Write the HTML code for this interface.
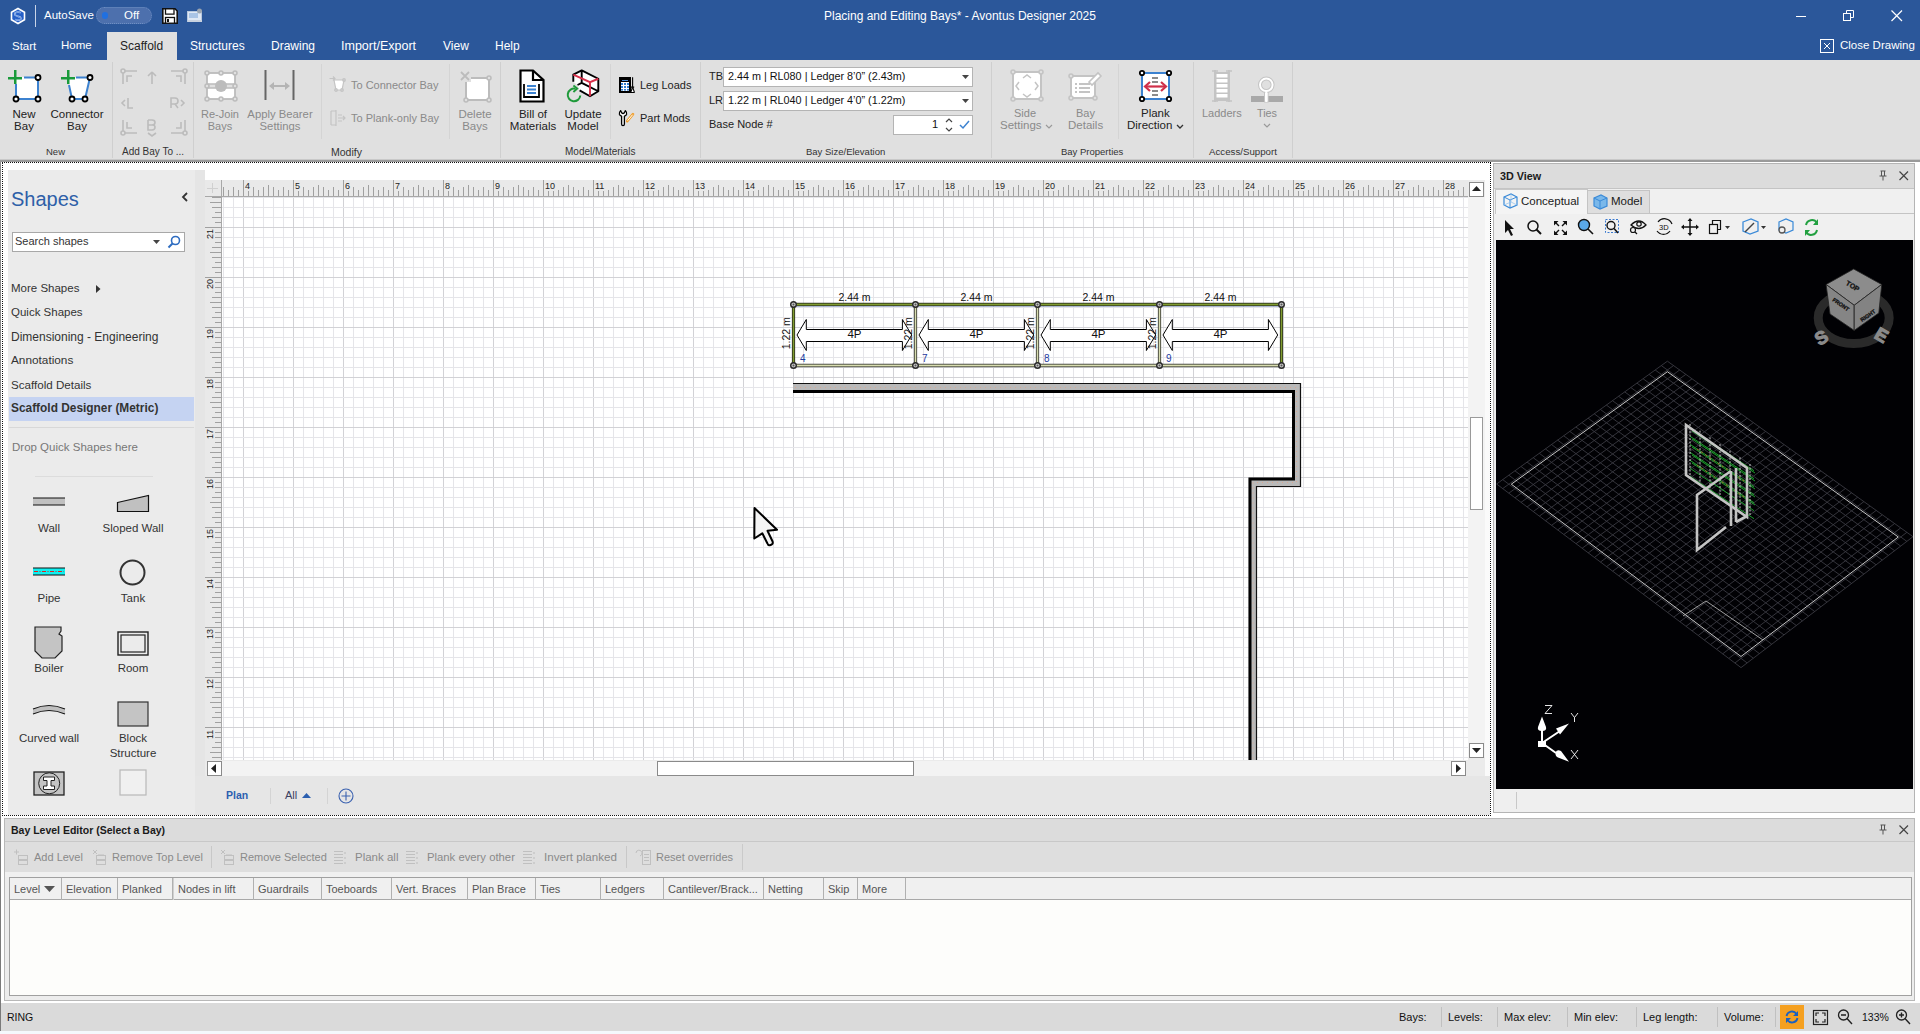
<!DOCTYPE html>
<html><head><meta charset="utf-8">
<style>
*{margin:0;padding:0;box-sizing:border-box}
html,body{width:1920px;height:1034px;overflow:hidden;background:#fff;font-family:"Liberation Sans",sans-serif;font-size:12px;color:#222}
.a{position:absolute}
.t{position:absolute;white-space:nowrap;line-height:1}
svg{position:absolute;overflow:visible}
</style></head><body>
<!-- ===== TITLE BAR ===== -->
<div class="a" style="left:0;top:0;width:1920px;height:60px;background:#2b579a"></div>
<svg style="left:9px;top:7px" width="18" height="18" viewBox="0 0 18 18"><path d="M9 1.5 L15.5 5.2 L15.5 12.8 L9 16.5 L2.5 12.8 L2.5 5.2 Z" fill="#2660c8" stroke="#fff" stroke-width="1.6"/><path d="M11.8 5.8 Q9 4.4 6.6 5.6 Q5.2 6.6 6.2 8.2 Q7.2 9 9.8 9.6 Q12.6 10.4 11.6 12.4 Q9.6 14 6.2 12.4" fill="none" stroke="#c8d8f0" stroke-width="1.6"/><path d="M11.8 5.8 Q9 4.4 6.6 5.6 Q5.2 6.6 6.2 8.2 Q7.2 9 9.8 9.6 Q12.6 10.4 11.6 12.4 Q9.6 14 6.2 12.4" fill="none" stroke="#1f62d8" stroke-width="0.6"/></svg>
<div class="a" style="left:35px;top:5px;width:1px;height:22px;background:#c9d4e8"></div>
<div class="t" style="left:44px;top:10px;font-size:11.5px;color:#fff">AutoSave</div>
<div class="a" style="left:96px;top:7px;width:56px;height:17px;border-radius:9px;background:#4d70ad;border:1px dotted #6f8fc4"></div>
<div class="a" style="left:102px;top:12px;width:6px;height:7px;border-radius:3px;background:#2070e0"></div>
<div class="t" style="left:124px;top:10px;font-size:11.5px;color:#fff">Off</div>
<svg style="left:162px;top:8px" width="16" height="16" viewBox="0 0 16 16"><path d="M0.8 0.8 H13 L15.2 3 V15.2 H0.8 Z" fill="#fff" stroke="#111" stroke-width="1.6"/><path d="M3.5 1 V6.2 H12 V1" fill="none" stroke="#111" stroke-width="1.3"/><rect x="3.5" y="9.5" width="9" height="5.7" fill="#fff" stroke="#111" stroke-width="1.3"/><rect x="5" y="11" width="2" height="3" fill="#111"/></svg>
<svg style="left:187px;top:8px" width="16" height="16" viewBox="0 0 16 16"><rect x="0.5" y="3.5" width="14" height="10" fill="#dfe8f5" stroke="#b8c8de"/><rect x="2" y="5" width="9" height="5" fill="#a9c4e6"/><rect x="1" y="12" width="14" height="2" fill="#c8d2e0"/><circle cx="12.5" cy="3" r="2.5" fill="#9aa4b0"/></svg>
<div class="t" style="left:824px;top:10px;font-size:12px;color:#fff">Placing and Editing Bays* - Avontus Designer 2025</div>
<div class="a" style="left:1796px;top:16px;width:10px;height:1px;background:#fff"></div>
<svg style="left:1843px;top:10px" width="12" height="12" viewBox="0 0 12 12"><rect x="0.5" y="3.5" width="7" height="7" fill="none" stroke="#fff"/><path d="M3.5 3.5 V0.5 H10.5 V7.5 H7.5" fill="none" stroke="#fff"/></svg>
<svg style="left:1891px;top:10px" width="12" height="12" viewBox="0 0 12 12"><path d="M0.5 0.5 L11 11 M11 0.5 L0.5 11" stroke="#fff" stroke-width="1.2"/></svg>
<!-- tabs -->
<div class="a" style="left:107px;top:32px;width:70px;height:28px;background:#e0e0e0"></div>
<div class="t" style="left:12px;top:41px;font-size:11.5px;color:#fff">Start</div>
<div class="t" style="left:61px;top:40px;font-size:11.5px;color:#fff">Home</div>
<div class="t" style="left:120px;top:40px;font-size:12px;color:#222">Scaffold</div>
<div class="t" style="left:190px;top:40px;font-size:12px;color:#fff">Structures</div>
<div class="t" style="left:271px;top:40px;font-size:12px;color:#fff">Drawing</div>
<div class="t" style="left:341px;top:40px;font-size:12.5px;color:#fff">Import/Export</div>
<div class="t" style="left:443px;top:40px;font-size:12px;color:#fff">View</div>
<div class="t" style="left:495px;top:40px;font-size:12px;color:#fff">Help</div>
<svg style="left:1820px;top:39px" width="14" height="14" viewBox="0 0 14 14"><rect x="0.5" y="0.5" width="13" height="13" fill="none" stroke="#fff"/><path d="M4 4 L10 10 M10 4 L4 10" stroke="#fff" stroke-width="1"/></svg>
<div class="t" style="left:1840px;top:40px;font-size:11.5px;color:#fff">Close Drawing</div>
<!-- ===== RIBBON ===== -->
<div class="a" style="left:0;top:60px;width:1920px;height:100px;background:#e0e0e0"></div>
<div class="a" style="left:0;top:159px;width:1920px;height:1px;background:#c8c8c8"></div>
<div class="a" style="left:0;top:160px;width:1920px;height:2px;background:#9a9a9a"></div>
<!-- group separators -->
<div class="a" style="left:112px;top:62px;width:1px;height:96px;background:#cfcfcf"></div>
<div class="a" style="left:193px;top:62px;width:1px;height:96px;background:#cfcfcf"></div>
<div class="a" style="left:500px;top:62px;width:1px;height:96px;background:#cfcfcf"></div>
<div class="a" style="left:700px;top:62px;width:1px;height:96px;background:#cfcfcf"></div>
<div class="a" style="left:991px;top:62px;width:1px;height:96px;background:#cfcfcf"></div>
<div class="a" style="left:1193px;top:62px;width:1px;height:96px;background:#cfcfcf"></div>
<div class="a" style="left:1292px;top:62px;width:1px;height:96px;background:#cfcfcf"></div>
<!-- inner separators -->
<div class="a" style="left:321px;top:64px;width:1px;height:75px;background:#d4d4d4"></div>
<div class="a" style="left:449px;top:64px;width:1px;height:75px;background:#d4d4d4"></div>
<div class="a" style="left:610px;top:64px;width:1px;height:75px;background:#d4d4d4"></div>
<div class="a" style="left:1118px;top:64px;width:1px;height:75px;background:#d4d4d4"></div>
<!-- group labels -->
<div class="t" style="left:46px;top:147px;font-size:9.5px;color:#333">New</div>
<div class="t" style="left:122px;top:147px;font-size:10px;color:#333">Add Bay To ...</div>
<div class="t" style="left:331px;top:147px;font-size:10.5px;color:#333">Modify</div>
<div class="t" style="left:565px;top:147px;font-size:10px;color:#333">Model/Materials</div>
<div class="t" style="left:806px;top:147px;font-size:9.5px;color:#333">Bay Size/Elevation</div>
<div class="t" style="left:1061px;top:147px;font-size:9.5px;color:#333">Bay Properties</div>
<div class="t" style="left:1209px;top:147px;font-size:9.7px;color:#333">Access/Support</div>
<!-- New Bay -->
<svg style="left:8px;top:69px" width="34" height="34" viewBox="0 0 34 34"><rect x="8" y="8" width="22" height="22" fill="#fff"/><path d="M16 8.5 H30 V30 H8 V15" fill="none" stroke="#3c82d0" stroke-width="2"/><rect x="0" y="8" width="14" height="2.5" fill="#1a9a3a"/><rect x="6" y="1" width="2.5" height="14" fill="#1a9a3a"/><circle cx="30" cy="8.5" r="2.5" fill="#fff" stroke="#000" stroke-width="1.8"/><circle cx="30" cy="30" r="2.5" fill="#fff" stroke="#000" stroke-width="1.8"/><circle cx="8" cy="30" r="2.5" fill="#fff" stroke="#000" stroke-width="1.8"/></svg>
<div class="t" style="left:11px;top:108px;font-size:11.5px;color:#222;width:26px;text-align:center;line-height:12px;white-space:normal">New Bay</div>
<!-- Connector Bay -->
<svg style="left:60px;top:69px" width="34" height="34" viewBox="0 0 34 34"><path d="M8 8.5 H30 L25 30 H12 Z" fill="#fff"/><path d="M16 8.5 H30 L25 30 H12 L9 16" fill="none" stroke="#3c82d0" stroke-width="2"/><rect x="1" y="8" width="14" height="2.5" fill="#1a9a3a"/><rect x="7" y="1" width="2.5" height="14" fill="#1a9a3a"/><circle cx="30" cy="8.5" r="2.5" fill="#fff" stroke="#000" stroke-width="1.8"/><circle cx="25" cy="30" r="2.5" fill="#fff" stroke="#000" stroke-width="1.8"/><circle cx="12" cy="30" r="2.5" fill="#fff" stroke="#000" stroke-width="1.8"/></svg>
<div class="t" style="left:50px;top:108px;font-size:11.5px;color:#222;width:54px;text-align:center;line-height:12px;white-space:normal">Connector Bay</div>
<!-- Add Bay To grid -->
<svg style="left:118px;top:66px" width="72" height="72" viewBox="0 0 72 72" fill="none" stroke="#bcbcbc" stroke-width="1.6">
<circle cx="5" cy="5" r="2"/><path d="M7 5 H19 M5 7 V18 M9 16 V10 H14"/>
<path d="M34 6 L30 10 M34 6 L38 10 M34 6 V18"/>
<circle cx="67" cy="5" r="2"/><path d="M65 5 H53 M67 7 V18 M63 16 V10 H58"/>
<path d="M7 34 L4 37 L7 40 M10 32 V42 H15"/>
<path d="M53 42 V32 H57 Q60 32 60 35 Q60 38 57 38 H53 M57 38 L60 42 M63 34 L66 37 L63 40"/>
<circle cx="5" cy="67" r="2"/><path d="M7 67 H19 M5 65 V54 M9 56 V62 H14"/>
<path d="M30 54 V64 H34 Q37 64 37 61 Q37 59 34 59 H30 M34 59 Q37 59 37 56.5 Q37 54 34 54 H30 M30 67 L34 70 L38 67"/>
<circle cx="67" cy="67" r="2"/><path d="M65 67 H53 M67 65 V54 M63 56 V62 H58"/>
</svg>
<!-- Re-Join Bays -->
<svg style="left:203px;top:69px" width="36" height="34" viewBox="0 0 36 34"><rect x="4" y="4" width="28" height="26" fill="#fff" stroke="#bcbcbc" stroke-width="1.8"/><rect x="3" y="15" width="30" height="4" fill="#e0e0e0" stroke="none"/><path d="M4 15 H32 M4 19 H32" stroke="#bcbcbc" stroke-width="1.6"/><circle cx="18" cy="17" r="6" fill="#bcbcbc"/><g fill="#e0e0e0" stroke="#bcbcbc" stroke-width="1.5"><circle cx="4" cy="4" r="2"/><circle cx="18" cy="4" r="2"/><circle cx="32" cy="4" r="2"/><circle cx="4" cy="17" r="2"/><circle cx="32" cy="17" r="2"/><circle cx="4" cy="30" r="2"/><circle cx="18" cy="30" r="2"/><circle cx="32" cy="30" r="2"/></g></svg>
<div class="t" style="left:198px;top:108px;font-size:11px;color:#8a8a8a;width:44px;text-align:center;line-height:12px;white-space:normal">Re-Join Bays</div>
<!-- Apply Bearer -->
<svg style="left:263px;top:69px" width="34" height="34" viewBox="0 0 34 34"><path d="M2.5 1 V31 M30.5 1 V31" stroke="#666" stroke-width="2"/><path d="M8 17 H25" stroke="#b4b4b4" stroke-width="2"/><path d="M6 17 L11 13 V21 Z M27 17 L22 13 V21 Z" fill="#b4b4b4"/></svg>
<div class="t" style="left:244px;top:108px;font-size:11.3px;color:#8a8a8a;width:72px;text-align:center;line-height:12px;white-space:normal">Apply Bearer Settings</div>
<!-- To Connector / Plank-only -->
<svg style="left:329px;top:76px" width="18" height="18" viewBox="0 0 18 18" fill="none" stroke="#c4c4c4" stroke-width="1.2"><path d="M0.5 2.5 H6 M4 0.5 L6 2.5 L4 4.5"/><path d="M5 4 H15 L13 14 H7 Z" fill="#fff"/><circle cx="15" cy="4" r="1.3"/><circle cx="13" cy="14" r="1.3"/><circle cx="7" cy="14" r="1.3"/></svg>
<div class="t" style="left:351px;top:80px;font-size:11px;color:#8a8a8a">To Connector Bay</div>
<svg style="left:329px;top:109px" width="18" height="18" viewBox="0 0 18 18" fill="none" stroke="#c4c4c4" stroke-width="1.2"><path d="M2 2 V16 M7 1 V17 M2 2 H7 M2 16 H7 M9 6 H13 M9 9 H16 M14 7 L16 9 L14 11 M9 12 H13"/></svg>
<div class="t" style="left:351px;top:113px;font-size:11px;color:#8a8a8a">To Plank-only Bay</div>
<!-- Delete Bays -->
<svg style="left:459px;top:70px" width="34" height="34" viewBox="0 0 34 34"><rect x="7" y="8" width="23" height="22" fill="#fff" stroke="#bcbcbc" stroke-width="2"/><rect x="2" y="2" width="10" height="10" fill="#e0e0e0"/><path d="M2 2 L10 10 M10 2 L2 10" stroke="#bcbcbc" stroke-width="1.8"/><g fill="#e0e0e0" stroke="#bcbcbc" stroke-width="1.5"><circle cx="30" cy="8" r="2"/><circle cx="30" cy="30" r="2"/><circle cx="7" cy="30" r="2"/></g></svg>
<div class="t" style="left:454px;top:108px;font-size:11.5px;color:#8a8a8a;width:42px;text-align:center;line-height:12px;white-space:normal">Delete Bays</div>
<!-- Bill of Materials -->
<svg style="left:519px;top:69px" width="28" height="34" viewBox="0 0 28 34"><path d="M1.5 1.5 H14 L24.5 11 V32.5 H1.5 Z" fill="#fff" stroke="#000" stroke-width="2.2"/><path d="M14 1.5 V11 H24.5" fill="none" stroke="#000" stroke-width="2.2"/><path d="M5 15 V28 H20 V15" fill="none" stroke="#000" stroke-width="1.8"/><path d="M8 17 H17 M8 20.5 H17 M8 24 H17" stroke="#3c82d0" stroke-width="1.8"/></svg>
<div class="t" style="left:504px;top:108px;font-size:11.5px;color:#222;width:58px;text-align:center;line-height:12px;white-space:normal">Bill of Materials</div>
<!-- Update Model -->
<svg style="left:0;top:0" width="1" height="1"><path d="M573.3 74.6 L581.7 70.4 L598.3 78.75 V91.25 L590 96.25 L579.6 90.4 L577.5 85 L573.3 81.7 Z" fill="#fff"/>
<path d="M573.3 81.7 V74.6 L581.7 70.4 L598.3 78.75 V91.25 L590 96.25 L579.6 90.4 M581.7 70.4 V82.9 L577.5 85 M581.7 82.9 L598.3 91.25" fill="none" stroke="#000" stroke-width="1.9" stroke-linejoin="round"/>
<path d="M573.3 74.6 L590 82.1 L598.3 78.75 M590 82.1 V96.25" fill="none" stroke="#d8304a" stroke-width="1.9"/>
<path d="M580.3 95.5 A6.3 6.3 0 1 1 575.5 88.8" fill="none" stroke="#1f9a3a" stroke-width="2"/>
<path d="M573.4 85.5 L577.2 88.6 L573.4 92" fill="none" stroke="#1f9a3a" stroke-width="1.9"/></svg>
<div class="t" style="left:560px;top:108px;font-size:11.5px;color:#222;width:46px;text-align:center;line-height:12px;white-space:normal">Update Model</div>
<!-- Leg Loads -->
<svg style="left:0;top:0" width="1" height="1"><rect x="620" y="78" width="10" height="14" fill="#fff" stroke="#000" stroke-width="2"/><rect x="621.5" y="79.5" width="7" height="2" fill="#4a90d8" stroke="#000" stroke-width="1"/>
<g fill="#2f7fd0"><rect x="621" y="83" width="2" height="2"/><rect x="624" y="83" width="2" height="2"/><rect x="627" y="83" width="2" height="2"/><rect x="621" y="86" width="2" height="2"/><rect x="624" y="86" width="2" height="2"/><rect x="627" y="86" width="2" height="2"/><rect x="621" y="89" width="2" height="1.6"/><rect x="624" y="89" width="2" height="1.6"/><rect x="627" y="89" width="2" height="1.6"/></g>
<path d="M632.6 77.3 V87 M631 87 H634.2 M632 87 V89 L631 91.5 V92.5 H634.2 V91.5 L633.2 89 V87" fill="#fff" stroke="#000" stroke-width="1.1"/></svg>
<div class="t" style="left:640px;top:80px;font-size:11px;color:#222">Leg Loads</div>
<svg style="left:618px;top:109px" width="18" height="18" viewBox="0 0 18 18"><path d="M2.6 1.6 Q0.9 3.4 1.4 5.2 Q2 6.8 3.6 7.2 V15 Q3.6 16.6 5 16.6 Q6.4 16.6 6.4 15 V7.2 Q8 6.8 8.6 5.2 Q9.1 3.4 7.4 1.6 L6.4 3.8 Q5 5.2 3.6 3.8 Z" fill="#fff" stroke="#000" stroke-width="1.3" stroke-linejoin="round"/><path d="M9.2 12.2 L15 5.2" stroke="#f0a030" stroke-width="2.6" stroke-linecap="round"/><path d="M9.6 11.7 L14.6 5.7" stroke="#fff" stroke-width="1"/></svg>
<div class="t" style="left:640px;top:113px;font-size:11px;color:#222">Part Mods</div>
<!-- Bay Size -->
<div class="t" style="left:709px;top:71px;font-size:11px;color:#222">TB</div>
<div class="a" style="left:723px;top:67px;width:250px;height:20px;background:#fff;border:1px solid #b4b4b4"></div>
<div class="t" style="left:728px;top:71px;font-size:10.8px;color:#111">2.44 m | RL080 | Ledger 8’0” (2.43m)</div>
<svg style="left:962px;top:75px" width="8" height="5"><path d="M0 0 H7 L3.5 4 Z" fill="#444"/></svg>
<div class="t" style="left:709px;top:95px;font-size:11px;color:#222">LR</div>
<div class="a" style="left:723px;top:91px;width:250px;height:20px;background:#fff;border:1px solid #b4b4b4"></div>
<div class="t" style="left:728px;top:95px;font-size:10.8px;color:#111">1.22 m | RL040 | Ledger 4’0” (1.22m)</div>
<svg style="left:962px;top:99px" width="8" height="5"><path d="M0 0 H7 L3.5 4 Z" fill="#444"/></svg>
<div class="t" style="left:709px;top:119px;font-size:11px;color:#222">Base Node #</div>
<div class="a" style="left:893px;top:115px;width:80px;height:20px;background:#fff;border:1px solid #b4b4b4"></div>
<div class="t" style="left:932px;top:119px;font-size:11px;color:#111">1</div>
<svg style="left:945px;top:118px" width="8" height="14"><path d="M1 4 L4 1 L7 4 M1 10 L4 13 L7 10" fill="none" stroke="#444" stroke-width="1.2"/></svg>
<svg style="left:959px;top:119px" width="11" height="11"><path d="M1 6 L4 9 L10 2" fill="none" stroke="#3c82d0" stroke-width="1.5"/></svg>
<!-- Side Settings -->
<svg style="left:1010px;top:69px" width="34" height="34" viewBox="0 0 34 34"><rect x="3" y="3" width="28" height="27" fill="#fff" stroke="#c4c4c4" stroke-width="2"/><path d="M13 9 L17 6 L21 9 M13 25 L17 28 L21 25 M9 13 L6 17 L9 21 M25 13 L28 17 L25 21" fill="none" stroke="#c4c4c4" stroke-width="1.5"/><g fill="#e0e0e0" stroke="#c4c4c4" stroke-width="1.5"><circle cx="3" cy="3" r="2"/><circle cx="31" cy="3" r="2"/><circle cx="3" cy="30" r="2"/><circle cx="31" cy="30" r="2"/></g></svg>
<div class="t" style="left:1014px;top:108px;font-size:11px;color:#8a8a8a">Side</div>
<div class="t" style="left:1000px;top:120px;font-size:11.5px;color:#8a8a8a">Settings</div>
<svg style="left:1045px;top:124px" width="8" height="5"><path d="M1 1 L4 4 L7 1" fill="none" stroke="#9a9a9a" stroke-width="1.2"/></svg>
<!-- Bay Details -->
<svg style="left:1068px;top:69px" width="34" height="34" viewBox="0 0 34 34"><rect x="3" y="7" width="24" height="22" fill="#fff" stroke="#c4c4c4" stroke-width="2"/><path d="M7 15 H9 M11 15 H22 M7 19 H9 M11 19 H22 M7 23 H9 M11 23 H22" stroke="#c4c4c4" stroke-width="2"/><path d="M21 13 L30 4 L33 7 L24 16 Z" fill="#fff" stroke="#c4c4c4" stroke-width="1.6"/><g fill="#e0e0e0" stroke="#c4c4c4" stroke-width="1.5"><circle cx="3" cy="7" r="2"/><circle cx="3" cy="29" r="2"/><circle cx="27" cy="29" r="2"/></g></svg>
<div class="t" style="left:1076px;top:108px;font-size:11px;color:#8a8a8a">Bay</div>
<div class="t" style="left:1068px;top:120px;font-size:11.5px;color:#8a8a8a">Details</div>
<!-- Plank Direction -->
<svg style="left:1139px;top:70px" width="34" height="34" viewBox="0 0 34 34"><rect x="3" y="3" width="27" height="26" fill="#fff" stroke="#3c82d0" stroke-width="2"/><path d="M13 8 H19 M13 12 H19 M13 21 H19 M13 25 H19" stroke="#666" stroke-width="1.5"/><path d="M7 16.5 H26" stroke="#d0304a" stroke-width="2.2"/><path d="M11 12 L6 16.5 L11 21 M22 12 L27 16.5 L22 21" fill="none" stroke="#d0304a" stroke-width="2.2"/><g fill="#fff" stroke="#000" stroke-width="1.8"><circle cx="3" cy="3" r="2.2"/><circle cx="30" cy="3" r="2.2"/><circle cx="3" cy="29" r="2.2"/><circle cx="30" cy="29" r="2.2"/></g></svg>
<div class="t" style="left:1141px;top:108px;font-size:11.5px;color:#222">Plank</div>
<div class="t" style="left:1127px;top:120px;font-size:11.5px;color:#222">Direction</div>
<svg style="left:1176px;top:124px" width="8" height="5"><path d="M1 1 L4 4 L7 1" fill="none" stroke="#333" stroke-width="1.3"/></svg>
<!-- Ladders -->
<svg style="left:0;top:0" width="1" height="1"><rect x="1216" y="72" width="12" height="29" fill="#c4c4c4"/><g fill="#fff"><rect x="1216.5" y="74" width="11" height="3.5"/><rect x="1216.5" y="79" width="11" height="3.5"/><rect x="1216.5" y="84" width="11" height="3.5"/><rect x="1216.5" y="89" width="11" height="3.5"/><rect x="1216.5" y="94" width="11" height="3.5"/></g><path d="M1215 70 V102 M1229 70 V102" stroke="#c4c4c4" stroke-width="2"/><path d="M1212 71 H1218 M1226 71 H1232 M1212 101 H1218 M1226 101 H1232" stroke="#c4c4c4" stroke-width="1.6"/></svg>
<div class="t" style="left:1202px;top:108px;font-size:11px;color:#8a8a8a">Ladders</div>
<!-- Ties -->
<svg style="left:0;top:0" width="1" height="1"><rect x="1251" y="96" width="32" height="6" fill="#a9a9a9"/><rect x="1264.5" y="90" width="3.6" height="12" fill="#fff" stroke="#c4c4c4" stroke-width="1"/><circle cx="1266.3" cy="84.8" r="6.3" fill="none" stroke="#c4c4c4" stroke-width="4"/><circle cx="1266.3" cy="84.8" r="6.3" fill="none" stroke="#fff" stroke-width="2"/><rect x="1265.3" y="91" width="2" height="11" fill="#fff"/></svg>
<div class="t" style="left:1257px;top:108px;font-size:10.8px;color:#8a8a8a">Ties</div>
<svg style="left:1263px;top:123px" width="8" height="5"><path d="M1 1 L4 4 L7 1" fill="none" stroke="#9a9a9a" stroke-width="1.2"/></svg>
<!-- ===== MAIN AREA / SHAPES PANEL ===== -->
<div class="a" style="left:0;top:162px;width:1920px;height:655px;background:#fff"></div>
<div class="a" style="left:0;top:162px;width:1px;height:870px;background:#8a8a8a"></div>
<div class="a" style="left:8px;top:170px;width:197px;height:645px;background:#ebebeb"></div><div class="a" style="left:195px;top:170px;width:10px;height:645px;background:#e5e5e5"></div>
<div class="t" style="left:11px;top:189px;font-size:20px;color:#2e5fa8">Shapes</div>
<svg style="left:181px;top:192px" width="8" height="10"><path d="M6 1 L2 5 L6 9" fill="none" stroke="#333" stroke-width="1.8"/></svg>
<div class="a" style="left:12px;top:232px;width:173px;height:20px;background:#fff;border:1px solid #a8a8a8"></div>
<div class="t" style="left:15px;top:236px;font-size:11px;color:#333">Search shapes</div>
<svg style="left:153px;top:240px" width="7" height="4"><path d="M0 0 H7 L3.5 4 Z" fill="#444"/></svg>
<svg style="left:167px;top:235px" width="14" height="14"><circle cx="8.5" cy="5.5" r="4" fill="none" stroke="#2e6cc0" stroke-width="1.6"/><path d="M5.5 8.5 L1.5 12.5" stroke="#2e6cc0" stroke-width="2"/></svg>
<div class="t" style="left:11px;top:283px;font-size:11.5px;color:#333">More Shapes</div>
<svg style="left:96px;top:285px" width="5" height="8"><path d="M0 0 V8 L4.5 4 Z" fill="#333"/></svg>
<div class="t" style="left:11px;top:307px;font-size:11.5px;color:#333">Quick Shapes</div>
<div class="t" style="left:11px;top:331px;font-size:12px;color:#333">Dimensioning - Engineering</div>
<div class="t" style="left:11px;top:355px;font-size:11.8px;color:#333">Annotations</div>
<div class="t" style="left:11px;top:379px;font-size:11.6px;color:#333">Scaffold Details</div>
<div class="a" style="left:9px;top:397px;width:185px;height:24px;background:#c5d3f2"></div>
<div class="t" style="left:11px;top:403px;font-size:11.9px;font-weight:bold;color:#333">Scaffold Designer (Metric)</div>
<div class="a" style="left:9px;top:427px;width:185px;height:1px;background:#d8d8d8"></div>
<div class="t" style="left:12px;top:442px;font-size:11.5px;color:#777">Drop Quick Shapes here</div>
<div class="a" style="left:35px;top:476px;width:118px;height:1px;background:#dcdcdc"></div>
<!-- shapes grid -->
<svg style="left:0;top:0" width="1" height="1">
<rect x="33" y="498" width="32" height="7" fill="#c0c0c0"/><path d="M33 498 H65 M33 505 H65" stroke="#111" stroke-width="1.2"/>
<path d="M117.5 502.5 L148.5 495.5 V511.5 H117.5 Z" fill="#c0c0c0" stroke="#111" stroke-width="1.2"/>
<rect x="33" y="568" width="32" height="7" fill="#10f0f0"/><path d="M33 568 H65 M33 575 H65" stroke="#111" stroke-width="1.2"/>
<path d="M34 571.5 H64" stroke="#e02020" stroke-width="1" stroke-dasharray="4 1.5 1 1.5"/>
<circle cx="132.5" cy="572.5" r="12" fill="none" stroke="#333" stroke-width="2"/>
<path d="M35 627 H61 V631 L59 634 L62 636 V651 L55 658 H42 L35 651 Z" fill="#c4c4c4" stroke="#222" stroke-width="1.2"/>
<rect x="118" y="632" width="30" height="23" fill="none" stroke="#222" stroke-width="1.4"/>
<rect x="121" y="635" width="24" height="17" fill="none" stroke="#222" stroke-width="1.2"/>
<path d="M33 709 Q49 702 65 709 V714 Q49 707 33 714 Z" fill="#c0c0c0"/><path d="M33 709 Q49 702 65 709 M33 714 Q49 707 65 714" fill="none" stroke="#111" stroke-width="1.1"/>
<rect x="118" y="702" width="30" height="24" fill="#c4c4c4" stroke="#333" stroke-width="1.2"/>
<rect x="34" y="772" width="30" height="23" fill="#c4c4c4" stroke="#222" stroke-width="1.3"/>
<circle cx="49.2" cy="783.3" r="10.5" fill="none" stroke="#222" stroke-width="1"/>
<path d="M43.5 777 H54.5 V780.5 H51 V786 H54.5 V789.5 H43.5 V786 H47 V780.5 H43.5 Z" fill="#fff" stroke="#222" stroke-width="1"/>
<rect x="120" y="770" width="26" height="25" fill="#f0f0f0" stroke="#b8b8b8" stroke-width="1.2"/>
</svg>
<div class="t" style="left:9px;top:523px;width:80px;text-align:center;font-size:11.5px;color:#333">Wall</div>
<div class="t" style="left:92px;top:523px;width:82px;text-align:center;font-size:11.5px;color:#333">Sloped Wall</div>
<div class="t" style="left:9px;top:593px;width:80px;text-align:center;font-size:11.5px;color:#333">Pipe</div>
<div class="t" style="left:92px;top:593px;width:82px;text-align:center;font-size:11.5px;color:#333">Tank</div>
<div class="t" style="left:9px;top:663px;width:80px;text-align:center;font-size:11.5px;color:#333">Boiler</div>
<div class="t" style="left:92px;top:663px;width:82px;text-align:center;font-size:11.5px;color:#333">Room</div>
<div class="t" style="left:9px;top:733px;width:80px;text-align:center;font-size:11.5px;color:#333">Curved wall</div>
<div class="t" style="left:92px;top:733px;width:82px;text-align:center;font-size:11.5px;color:#333">Block</div>
<div class="t" style="left:92px;top:748px;width:82px;text-align:center;font-size:11.5px;color:#333">Structure</div>
<div class="a" style="left:205px;top:162px;width:1285px;height:18px;background:#fff"></div>
<div class="a" style="left:1468px;top:180px;width:22px;height:596px;background:#ebebeb"></div>
<div class="a" style="left:205px;top:760px;width:1285px;height:16px;background:#ebebeb"></div>
<div class="a" style="left:195px;top:776px;width:1295px;height:39px;background:#e6e6e6"></div>
<svg style="left:0;top:0" width="1920" height="1034"><rect x="221" y="196" width="1247" height="564" fill="#fff"/><path d="M223.5 196 V760" stroke="#e5e5e9"/><path d="M233.5 196 V760" stroke="#e5e5e9"/><path d="M243.5 196 V760" stroke="#d2d2d6"/><path d="M253.5 196 V760" stroke="#e5e5e9"/><path d="M263.5 196 V760" stroke="#e5e5e9"/><path d="M273.5 196 V760" stroke="#e5e5e9"/><path d="M283.5 196 V760" stroke="#e5e5e9"/><path d="M293.5 196 V760" stroke="#d2d2d6"/><path d="M303.5 196 V760" stroke="#e5e5e9"/><path d="M313.5 196 V760" stroke="#e5e5e9"/><path d="M323.5 196 V760" stroke="#e5e5e9"/><path d="M333.5 196 V760" stroke="#e5e5e9"/><path d="M343.5 196 V760" stroke="#d2d2d6"/><path d="M353.5 196 V760" stroke="#e5e5e9"/><path d="M363.5 196 V760" stroke="#e5e5e9"/><path d="M373.5 196 V760" stroke="#e5e5e9"/><path d="M383.5 196 V760" stroke="#e5e5e9"/><path d="M393.5 196 V760" stroke="#d2d2d6"/><path d="M403.5 196 V760" stroke="#e5e5e9"/><path d="M413.5 196 V760" stroke="#e5e5e9"/><path d="M423.5 196 V760" stroke="#e5e5e9"/><path d="M433.5 196 V760" stroke="#e5e5e9"/><path d="M443.5 196 V760" stroke="#d2d2d6"/><path d="M453.5 196 V760" stroke="#e5e5e9"/><path d="M463.5 196 V760" stroke="#e5e5e9"/><path d="M473.5 196 V760" stroke="#e5e5e9"/><path d="M483.5 196 V760" stroke="#e5e5e9"/><path d="M493.5 196 V760" stroke="#d2d2d6"/><path d="M503.5 196 V760" stroke="#e5e5e9"/><path d="M513.5 196 V760" stroke="#e5e5e9"/><path d="M523.5 196 V760" stroke="#e5e5e9"/><path d="M533.5 196 V760" stroke="#e5e5e9"/><path d="M543.5 196 V760" stroke="#d2d2d6"/><path d="M553.5 196 V760" stroke="#e5e5e9"/><path d="M563.5 196 V760" stroke="#e5e5e9"/><path d="M573.5 196 V760" stroke="#e5e5e9"/><path d="M583.5 196 V760" stroke="#e5e5e9"/><path d="M593.5 196 V760" stroke="#d2d2d6"/><path d="M603.5 196 V760" stroke="#e5e5e9"/><path d="M613.5 196 V760" stroke="#e5e5e9"/><path d="M623.5 196 V760" stroke="#e5e5e9"/><path d="M633.5 196 V760" stroke="#e5e5e9"/><path d="M643.5 196 V760" stroke="#d2d2d6"/><path d="M653.5 196 V760" stroke="#e5e5e9"/><path d="M663.5 196 V760" stroke="#e5e5e9"/><path d="M673.5 196 V760" stroke="#e5e5e9"/><path d="M683.5 196 V760" stroke="#e5e5e9"/><path d="M693.5 196 V760" stroke="#d2d2d6"/><path d="M703.5 196 V760" stroke="#e5e5e9"/><path d="M713.5 196 V760" stroke="#e5e5e9"/><path d="M723.5 196 V760" stroke="#e5e5e9"/><path d="M733.5 196 V760" stroke="#e5e5e9"/><path d="M743.5 196 V760" stroke="#d2d2d6"/><path d="M753.5 196 V760" stroke="#e5e5e9"/><path d="M763.5 196 V760" stroke="#e5e5e9"/><path d="M773.5 196 V760" stroke="#e5e5e9"/><path d="M783.5 196 V760" stroke="#e5e5e9"/><path d="M793.5 196 V760" stroke="#d2d2d6"/><path d="M803.5 196 V760" stroke="#e5e5e9"/><path d="M813.5 196 V760" stroke="#e5e5e9"/><path d="M823.5 196 V760" stroke="#e5e5e9"/><path d="M833.5 196 V760" stroke="#e5e5e9"/><path d="M843.5 196 V760" stroke="#d2d2d6"/><path d="M853.5 196 V760" stroke="#e5e5e9"/><path d="M863.5 196 V760" stroke="#e5e5e9"/><path d="M873.5 196 V760" stroke="#e5e5e9"/><path d="M883.5 196 V760" stroke="#e5e5e9"/><path d="M893.5 196 V760" stroke="#d2d2d6"/><path d="M903.5 196 V760" stroke="#e5e5e9"/><path d="M913.5 196 V760" stroke="#e5e5e9"/><path d="M923.5 196 V760" stroke="#e5e5e9"/><path d="M933.5 196 V760" stroke="#e5e5e9"/><path d="M943.5 196 V760" stroke="#d2d2d6"/><path d="M953.5 196 V760" stroke="#e5e5e9"/><path d="M963.5 196 V760" stroke="#e5e5e9"/><path d="M973.5 196 V760" stroke="#e5e5e9"/><path d="M983.5 196 V760" stroke="#e5e5e9"/><path d="M993.5 196 V760" stroke="#d2d2d6"/><path d="M1003.5 196 V760" stroke="#e5e5e9"/><path d="M1013.5 196 V760" stroke="#e5e5e9"/><path d="M1023.5 196 V760" stroke="#e5e5e9"/><path d="M1033.5 196 V760" stroke="#e5e5e9"/><path d="M1043.5 196 V760" stroke="#d2d2d6"/><path d="M1053.5 196 V760" stroke="#e5e5e9"/><path d="M1063.5 196 V760" stroke="#e5e5e9"/><path d="M1073.5 196 V760" stroke="#e5e5e9"/><path d="M1083.5 196 V760" stroke="#e5e5e9"/><path d="M1093.5 196 V760" stroke="#d2d2d6"/><path d="M1103.5 196 V760" stroke="#e5e5e9"/><path d="M1113.5 196 V760" stroke="#e5e5e9"/><path d="M1123.5 196 V760" stroke="#e5e5e9"/><path d="M1133.5 196 V760" stroke="#e5e5e9"/><path d="M1143.5 196 V760" stroke="#d2d2d6"/><path d="M1153.5 196 V760" stroke="#e5e5e9"/><path d="M1163.5 196 V760" stroke="#e5e5e9"/><path d="M1173.5 196 V760" stroke="#e5e5e9"/><path d="M1183.5 196 V760" stroke="#e5e5e9"/><path d="M1193.5 196 V760" stroke="#d2d2d6"/><path d="M1203.5 196 V760" stroke="#e5e5e9"/><path d="M1213.5 196 V760" stroke="#e5e5e9"/><path d="M1223.5 196 V760" stroke="#e5e5e9"/><path d="M1233.5 196 V760" stroke="#e5e5e9"/><path d="M1243.5 196 V760" stroke="#d2d2d6"/><path d="M1253.5 196 V760" stroke="#e5e5e9"/><path d="M1263.5 196 V760" stroke="#e5e5e9"/><path d="M1273.5 196 V760" stroke="#e5e5e9"/><path d="M1283.5 196 V760" stroke="#e5e5e9"/><path d="M1293.5 196 V760" stroke="#d2d2d6"/><path d="M1303.5 196 V760" stroke="#e5e5e9"/><path d="M1313.5 196 V760" stroke="#e5e5e9"/><path d="M1323.5 196 V760" stroke="#e5e5e9"/><path d="M1333.5 196 V760" stroke="#e5e5e9"/><path d="M1343.5 196 V760" stroke="#d2d2d6"/><path d="M1353.5 196 V760" stroke="#e5e5e9"/><path d="M1363.5 196 V760" stroke="#e5e5e9"/><path d="M1373.5 196 V760" stroke="#e5e5e9"/><path d="M1383.5 196 V760" stroke="#e5e5e9"/><path d="M1393.5 196 V760" stroke="#d2d2d6"/><path d="M1403.5 196 V760" stroke="#e5e5e9"/><path d="M1413.5 196 V760" stroke="#e5e5e9"/><path d="M1423.5 196 V760" stroke="#e5e5e9"/><path d="M1433.5 196 V760" stroke="#e5e5e9"/><path d="M1443.5 196 V760" stroke="#d2d2d6"/><path d="M1453.5 196 V760" stroke="#e5e5e9"/><path d="M1463.5 196 V760" stroke="#e5e5e9"/><path d="M221 197.5 H1468" stroke="#e5e5e9"/><path d="M221 207.5 H1468" stroke="#e5e5e9"/><path d="M221 217.5 H1468" stroke="#e5e5e9"/><path d="M221 227.5 H1468" stroke="#d2d2d6"/><path d="M221 237.5 H1468" stroke="#e5e5e9"/><path d="M221 247.5 H1468" stroke="#e5e5e9"/><path d="M221 257.5 H1468" stroke="#e5e5e9"/><path d="M221 267.5 H1468" stroke="#e5e5e9"/><path d="M221 277.5 H1468" stroke="#d2d2d6"/><path d="M221 287.5 H1468" stroke="#e5e5e9"/><path d="M221 297.5 H1468" stroke="#e5e5e9"/><path d="M221 307.5 H1468" stroke="#e5e5e9"/><path d="M221 317.5 H1468" stroke="#e5e5e9"/><path d="M221 327.5 H1468" stroke="#d2d2d6"/><path d="M221 337.5 H1468" stroke="#e5e5e9"/><path d="M221 347.5 H1468" stroke="#e5e5e9"/><path d="M221 357.5 H1468" stroke="#e5e5e9"/><path d="M221 367.5 H1468" stroke="#e5e5e9"/><path d="M221 377.5 H1468" stroke="#d2d2d6"/><path d="M221 387.5 H1468" stroke="#e5e5e9"/><path d="M221 397.5 H1468" stroke="#e5e5e9"/><path d="M221 407.5 H1468" stroke="#e5e5e9"/><path d="M221 417.5 H1468" stroke="#e5e5e9"/><path d="M221 427.5 H1468" stroke="#d2d2d6"/><path d="M221 437.5 H1468" stroke="#e5e5e9"/><path d="M221 447.5 H1468" stroke="#e5e5e9"/><path d="M221 457.5 H1468" stroke="#e5e5e9"/><path d="M221 467.5 H1468" stroke="#e5e5e9"/><path d="M221 477.5 H1468" stroke="#d2d2d6"/><path d="M221 487.5 H1468" stroke="#e5e5e9"/><path d="M221 497.5 H1468" stroke="#e5e5e9"/><path d="M221 507.5 H1468" stroke="#e5e5e9"/><path d="M221 517.5 H1468" stroke="#e5e5e9"/><path d="M221 527.5 H1468" stroke="#d2d2d6"/><path d="M221 537.5 H1468" stroke="#e5e5e9"/><path d="M221 547.5 H1468" stroke="#e5e5e9"/><path d="M221 557.5 H1468" stroke="#e5e5e9"/><path d="M221 567.5 H1468" stroke="#e5e5e9"/><path d="M221 577.5 H1468" stroke="#d2d2d6"/><path d="M221 587.5 H1468" stroke="#e5e5e9"/><path d="M221 597.5 H1468" stroke="#e5e5e9"/><path d="M221 607.5 H1468" stroke="#e5e5e9"/><path d="M221 617.5 H1468" stroke="#e5e5e9"/><path d="M221 627.5 H1468" stroke="#d2d2d6"/><path d="M221 637.5 H1468" stroke="#e5e5e9"/><path d="M221 647.5 H1468" stroke="#e5e5e9"/><path d="M221 657.5 H1468" stroke="#e5e5e9"/><path d="M221 667.5 H1468" stroke="#e5e5e9"/><path d="M221 677.5 H1468" stroke="#d2d2d6"/><path d="M221 687.5 H1468" stroke="#e5e5e9"/><path d="M221 697.5 H1468" stroke="#e5e5e9"/><path d="M221 707.5 H1468" stroke="#e5e5e9"/><path d="M221 717.5 H1468" stroke="#e5e5e9"/><path d="M221 727.5 H1468" stroke="#d2d2d6"/><path d="M221 737.5 H1468" stroke="#e5e5e9"/><path d="M221 747.5 H1468" stroke="#e5e5e9"/><path d="M221 757.5 H1468" stroke="#e5e5e9"/></svg>
<svg style="left:0;top:0" width="1920" height="1034"><rect x="205" y="180" width="1263" height="16" fill="#e9e9e9"/><rect x="205" y="196" width="16" height="564" fill="#e9e9e9"/><path d="M205 196.5 H1468 M221.5 180 V760" stroke="#a8a8a8"/><path d="M212.5 183 V193 M207 188.5 H218" stroke="#d0d0d0"/><path d="M223.5 187 V196" stroke="#a0a0a0"/><path d="M228.5 190 V196" stroke="#a0a0a0"/><path d="M233.5 187 V196" stroke="#a0a0a0"/><path d="M238.5 190 V196" stroke="#a0a0a0"/><path d="M243.5 180 V196" stroke="#a0a0a0"/><path d="M248.5 190 V196" stroke="#a0a0a0"/><path d="M253.5 187 V196" stroke="#a0a0a0"/><path d="M258.5 190 V196" stroke="#a0a0a0"/><path d="M263.5 187 V196" stroke="#a0a0a0"/><path d="M268.5 185 V196" stroke="#a0a0a0"/><path d="M273.5 187 V196" stroke="#a0a0a0"/><path d="M278.5 190 V196" stroke="#a0a0a0"/><path d="M283.5 187 V196" stroke="#a0a0a0"/><path d="M288.5 190 V196" stroke="#a0a0a0"/><path d="M293.5 180 V196" stroke="#a0a0a0"/><path d="M298.5 190 V196" stroke="#a0a0a0"/><path d="M303.5 187 V196" stroke="#a0a0a0"/><path d="M308.5 190 V196" stroke="#a0a0a0"/><path d="M313.5 187 V196" stroke="#a0a0a0"/><path d="M318.5 185 V196" stroke="#a0a0a0"/><path d="M323.5 187 V196" stroke="#a0a0a0"/><path d="M328.5 190 V196" stroke="#a0a0a0"/><path d="M333.5 187 V196" stroke="#a0a0a0"/><path d="M338.5 190 V196" stroke="#a0a0a0"/><path d="M343.5 180 V196" stroke="#a0a0a0"/><path d="M348.5 190 V196" stroke="#a0a0a0"/><path d="M353.5 187 V196" stroke="#a0a0a0"/><path d="M358.5 190 V196" stroke="#a0a0a0"/><path d="M363.5 187 V196" stroke="#a0a0a0"/><path d="M368.5 185 V196" stroke="#a0a0a0"/><path d="M373.5 187 V196" stroke="#a0a0a0"/><path d="M378.5 190 V196" stroke="#a0a0a0"/><path d="M383.5 187 V196" stroke="#a0a0a0"/><path d="M388.5 190 V196" stroke="#a0a0a0"/><path d="M393.5 180 V196" stroke="#a0a0a0"/><path d="M398.5 190 V196" stroke="#a0a0a0"/><path d="M403.5 187 V196" stroke="#a0a0a0"/><path d="M408.5 190 V196" stroke="#a0a0a0"/><path d="M413.5 187 V196" stroke="#a0a0a0"/><path d="M418.5 185 V196" stroke="#a0a0a0"/><path d="M423.5 187 V196" stroke="#a0a0a0"/><path d="M428.5 190 V196" stroke="#a0a0a0"/><path d="M433.5 187 V196" stroke="#a0a0a0"/><path d="M438.5 190 V196" stroke="#a0a0a0"/><path d="M443.5 180 V196" stroke="#a0a0a0"/><path d="M448.5 190 V196" stroke="#a0a0a0"/><path d="M453.5 187 V196" stroke="#a0a0a0"/><path d="M458.5 190 V196" stroke="#a0a0a0"/><path d="M463.5 187 V196" stroke="#a0a0a0"/><path d="M468.5 185 V196" stroke="#a0a0a0"/><path d="M473.5 187 V196" stroke="#a0a0a0"/><path d="M478.5 190 V196" stroke="#a0a0a0"/><path d="M483.5 187 V196" stroke="#a0a0a0"/><path d="M488.5 190 V196" stroke="#a0a0a0"/><path d="M493.5 180 V196" stroke="#a0a0a0"/><path d="M498.5 190 V196" stroke="#a0a0a0"/><path d="M503.5 187 V196" stroke="#a0a0a0"/><path d="M508.5 190 V196" stroke="#a0a0a0"/><path d="M513.5 187 V196" stroke="#a0a0a0"/><path d="M518.5 185 V196" stroke="#a0a0a0"/><path d="M523.5 187 V196" stroke="#a0a0a0"/><path d="M528.5 190 V196" stroke="#a0a0a0"/><path d="M533.5 187 V196" stroke="#a0a0a0"/><path d="M538.5 190 V196" stroke="#a0a0a0"/><path d="M543.5 180 V196" stroke="#a0a0a0"/><path d="M548.5 190 V196" stroke="#a0a0a0"/><path d="M553.5 187 V196" stroke="#a0a0a0"/><path d="M558.5 190 V196" stroke="#a0a0a0"/><path d="M563.5 187 V196" stroke="#a0a0a0"/><path d="M568.5 185 V196" stroke="#a0a0a0"/><path d="M573.5 187 V196" stroke="#a0a0a0"/><path d="M578.5 190 V196" stroke="#a0a0a0"/><path d="M583.5 187 V196" stroke="#a0a0a0"/><path d="M588.5 190 V196" stroke="#a0a0a0"/><path d="M593.5 180 V196" stroke="#a0a0a0"/><path d="M598.5 190 V196" stroke="#a0a0a0"/><path d="M603.5 187 V196" stroke="#a0a0a0"/><path d="M608.5 190 V196" stroke="#a0a0a0"/><path d="M613.5 187 V196" stroke="#a0a0a0"/><path d="M618.5 185 V196" stroke="#a0a0a0"/><path d="M623.5 187 V196" stroke="#a0a0a0"/><path d="M628.5 190 V196" stroke="#a0a0a0"/><path d="M633.5 187 V196" stroke="#a0a0a0"/><path d="M638.5 190 V196" stroke="#a0a0a0"/><path d="M643.5 180 V196" stroke="#a0a0a0"/><path d="M648.5 190 V196" stroke="#a0a0a0"/><path d="M653.5 187 V196" stroke="#a0a0a0"/><path d="M658.5 190 V196" stroke="#a0a0a0"/><path d="M663.5 187 V196" stroke="#a0a0a0"/><path d="M668.5 185 V196" stroke="#a0a0a0"/><path d="M673.5 187 V196" stroke="#a0a0a0"/><path d="M678.5 190 V196" stroke="#a0a0a0"/><path d="M683.5 187 V196" stroke="#a0a0a0"/><path d="M688.5 190 V196" stroke="#a0a0a0"/><path d="M693.5 180 V196" stroke="#a0a0a0"/><path d="M698.5 190 V196" stroke="#a0a0a0"/><path d="M703.5 187 V196" stroke="#a0a0a0"/><path d="M708.5 190 V196" stroke="#a0a0a0"/><path d="M713.5 187 V196" stroke="#a0a0a0"/><path d="M718.5 185 V196" stroke="#a0a0a0"/><path d="M723.5 187 V196" stroke="#a0a0a0"/><path d="M728.5 190 V196" stroke="#a0a0a0"/><path d="M733.5 187 V196" stroke="#a0a0a0"/><path d="M738.5 190 V196" stroke="#a0a0a0"/><path d="M743.5 180 V196" stroke="#a0a0a0"/><path d="M748.5 190 V196" stroke="#a0a0a0"/><path d="M753.5 187 V196" stroke="#a0a0a0"/><path d="M758.5 190 V196" stroke="#a0a0a0"/><path d="M763.5 187 V196" stroke="#a0a0a0"/><path d="M768.5 185 V196" stroke="#a0a0a0"/><path d="M773.5 187 V196" stroke="#a0a0a0"/><path d="M778.5 190 V196" stroke="#a0a0a0"/><path d="M783.5 187 V196" stroke="#a0a0a0"/><path d="M788.5 190 V196" stroke="#a0a0a0"/><path d="M793.5 180 V196" stroke="#a0a0a0"/><path d="M798.5 190 V196" stroke="#a0a0a0"/><path d="M803.5 187 V196" stroke="#a0a0a0"/><path d="M808.5 190 V196" stroke="#a0a0a0"/><path d="M813.5 187 V196" stroke="#a0a0a0"/><path d="M818.5 185 V196" stroke="#a0a0a0"/><path d="M823.5 187 V196" stroke="#a0a0a0"/><path d="M828.5 190 V196" stroke="#a0a0a0"/><path d="M833.5 187 V196" stroke="#a0a0a0"/><path d="M838.5 190 V196" stroke="#a0a0a0"/><path d="M843.5 180 V196" stroke="#a0a0a0"/><path d="M848.5 190 V196" stroke="#a0a0a0"/><path d="M853.5 187 V196" stroke="#a0a0a0"/><path d="M858.5 190 V196" stroke="#a0a0a0"/><path d="M863.5 187 V196" stroke="#a0a0a0"/><path d="M868.5 185 V196" stroke="#a0a0a0"/><path d="M873.5 187 V196" stroke="#a0a0a0"/><path d="M878.5 190 V196" stroke="#a0a0a0"/><path d="M883.5 187 V196" stroke="#a0a0a0"/><path d="M888.5 190 V196" stroke="#a0a0a0"/><path d="M893.5 180 V196" stroke="#a0a0a0"/><path d="M898.5 190 V196" stroke="#a0a0a0"/><path d="M903.5 187 V196" stroke="#a0a0a0"/><path d="M908.5 190 V196" stroke="#a0a0a0"/><path d="M913.5 187 V196" stroke="#a0a0a0"/><path d="M918.5 185 V196" stroke="#a0a0a0"/><path d="M923.5 187 V196" stroke="#a0a0a0"/><path d="M928.5 190 V196" stroke="#a0a0a0"/><path d="M933.5 187 V196" stroke="#a0a0a0"/><path d="M938.5 190 V196" stroke="#a0a0a0"/><path d="M943.5 180 V196" stroke="#a0a0a0"/><path d="M948.5 190 V196" stroke="#a0a0a0"/><path d="M953.5 187 V196" stroke="#a0a0a0"/><path d="M958.5 190 V196" stroke="#a0a0a0"/><path d="M963.5 187 V196" stroke="#a0a0a0"/><path d="M968.5 185 V196" stroke="#a0a0a0"/><path d="M973.5 187 V196" stroke="#a0a0a0"/><path d="M978.5 190 V196" stroke="#a0a0a0"/><path d="M983.5 187 V196" stroke="#a0a0a0"/><path d="M988.5 190 V196" stroke="#a0a0a0"/><path d="M993.5 180 V196" stroke="#a0a0a0"/><path d="M998.5 190 V196" stroke="#a0a0a0"/><path d="M1003.5 187 V196" stroke="#a0a0a0"/><path d="M1008.5 190 V196" stroke="#a0a0a0"/><path d="M1013.5 187 V196" stroke="#a0a0a0"/><path d="M1018.5 185 V196" stroke="#a0a0a0"/><path d="M1023.5 187 V196" stroke="#a0a0a0"/><path d="M1028.5 190 V196" stroke="#a0a0a0"/><path d="M1033.5 187 V196" stroke="#a0a0a0"/><path d="M1038.5 190 V196" stroke="#a0a0a0"/><path d="M1043.5 180 V196" stroke="#a0a0a0"/><path d="M1048.5 190 V196" stroke="#a0a0a0"/><path d="M1053.5 187 V196" stroke="#a0a0a0"/><path d="M1058.5 190 V196" stroke="#a0a0a0"/><path d="M1063.5 187 V196" stroke="#a0a0a0"/><path d="M1068.5 185 V196" stroke="#a0a0a0"/><path d="M1073.5 187 V196" stroke="#a0a0a0"/><path d="M1078.5 190 V196" stroke="#a0a0a0"/><path d="M1083.5 187 V196" stroke="#a0a0a0"/><path d="M1088.5 190 V196" stroke="#a0a0a0"/><path d="M1093.5 180 V196" stroke="#a0a0a0"/><path d="M1098.5 190 V196" stroke="#a0a0a0"/><path d="M1103.5 187 V196" stroke="#a0a0a0"/><path d="M1108.5 190 V196" stroke="#a0a0a0"/><path d="M1113.5 187 V196" stroke="#a0a0a0"/><path d="M1118.5 185 V196" stroke="#a0a0a0"/><path d="M1123.5 187 V196" stroke="#a0a0a0"/><path d="M1128.5 190 V196" stroke="#a0a0a0"/><path d="M1133.5 187 V196" stroke="#a0a0a0"/><path d="M1138.5 190 V196" stroke="#a0a0a0"/><path d="M1143.5 180 V196" stroke="#a0a0a0"/><path d="M1148.5 190 V196" stroke="#a0a0a0"/><path d="M1153.5 187 V196" stroke="#a0a0a0"/><path d="M1158.5 190 V196" stroke="#a0a0a0"/><path d="M1163.5 187 V196" stroke="#a0a0a0"/><path d="M1168.5 185 V196" stroke="#a0a0a0"/><path d="M1173.5 187 V196" stroke="#a0a0a0"/><path d="M1178.5 190 V196" stroke="#a0a0a0"/><path d="M1183.5 187 V196" stroke="#a0a0a0"/><path d="M1188.5 190 V196" stroke="#a0a0a0"/><path d="M1193.5 180 V196" stroke="#a0a0a0"/><path d="M1198.5 190 V196" stroke="#a0a0a0"/><path d="M1203.5 187 V196" stroke="#a0a0a0"/><path d="M1208.5 190 V196" stroke="#a0a0a0"/><path d="M1213.5 187 V196" stroke="#a0a0a0"/><path d="M1218.5 185 V196" stroke="#a0a0a0"/><path d="M1223.5 187 V196" stroke="#a0a0a0"/><path d="M1228.5 190 V196" stroke="#a0a0a0"/><path d="M1233.5 187 V196" stroke="#a0a0a0"/><path d="M1238.5 190 V196" stroke="#a0a0a0"/><path d="M1243.5 180 V196" stroke="#a0a0a0"/><path d="M1248.5 190 V196" stroke="#a0a0a0"/><path d="M1253.5 187 V196" stroke="#a0a0a0"/><path d="M1258.5 190 V196" stroke="#a0a0a0"/><path d="M1263.5 187 V196" stroke="#a0a0a0"/><path d="M1268.5 185 V196" stroke="#a0a0a0"/><path d="M1273.5 187 V196" stroke="#a0a0a0"/><path d="M1278.5 190 V196" stroke="#a0a0a0"/><path d="M1283.5 187 V196" stroke="#a0a0a0"/><path d="M1288.5 190 V196" stroke="#a0a0a0"/><path d="M1293.5 180 V196" stroke="#a0a0a0"/><path d="M1298.5 190 V196" stroke="#a0a0a0"/><path d="M1303.5 187 V196" stroke="#a0a0a0"/><path d="M1308.5 190 V196" stroke="#a0a0a0"/><path d="M1313.5 187 V196" stroke="#a0a0a0"/><path d="M1318.5 185 V196" stroke="#a0a0a0"/><path d="M1323.5 187 V196" stroke="#a0a0a0"/><path d="M1328.5 190 V196" stroke="#a0a0a0"/><path d="M1333.5 187 V196" stroke="#a0a0a0"/><path d="M1338.5 190 V196" stroke="#a0a0a0"/><path d="M1343.5 180 V196" stroke="#a0a0a0"/><path d="M1348.5 190 V196" stroke="#a0a0a0"/><path d="M1353.5 187 V196" stroke="#a0a0a0"/><path d="M1358.5 190 V196" stroke="#a0a0a0"/><path d="M1363.5 187 V196" stroke="#a0a0a0"/><path d="M1368.5 185 V196" stroke="#a0a0a0"/><path d="M1373.5 187 V196" stroke="#a0a0a0"/><path d="M1378.5 190 V196" stroke="#a0a0a0"/><path d="M1383.5 187 V196" stroke="#a0a0a0"/><path d="M1388.5 190 V196" stroke="#a0a0a0"/><path d="M1393.5 180 V196" stroke="#a0a0a0"/><path d="M1398.5 190 V196" stroke="#a0a0a0"/><path d="M1403.5 187 V196" stroke="#a0a0a0"/><path d="M1408.5 190 V196" stroke="#a0a0a0"/><path d="M1413.5 187 V196" stroke="#a0a0a0"/><path d="M1418.5 185 V196" stroke="#a0a0a0"/><path d="M1423.5 187 V196" stroke="#a0a0a0"/><path d="M1428.5 190 V196" stroke="#a0a0a0"/><path d="M1433.5 187 V196" stroke="#a0a0a0"/><path d="M1438.5 190 V196" stroke="#a0a0a0"/><path d="M1443.5 180 V196" stroke="#a0a0a0"/><path d="M1448.5 190 V196" stroke="#a0a0a0"/><path d="M1453.5 187 V196" stroke="#a0a0a0"/><path d="M1458.5 190 V196" stroke="#a0a0a0"/><path d="M1463.5 187 V196" stroke="#a0a0a0"/><path d="M212 197.5 H221" stroke="#a0a0a0"/><path d="M210 202.5 H221" stroke="#a0a0a0"/><path d="M212 207.5 H221" stroke="#a0a0a0"/><path d="M215 212.5 H221" stroke="#a0a0a0"/><path d="M212 217.5 H221" stroke="#a0a0a0"/><path d="M215 222.5 H221" stroke="#a0a0a0"/><path d="M205 227.5 H221" stroke="#a0a0a0"/><path d="M215 232.5 H221" stroke="#a0a0a0"/><path d="M212 237.5 H221" stroke="#a0a0a0"/><path d="M215 242.5 H221" stroke="#a0a0a0"/><path d="M212 247.5 H221" stroke="#a0a0a0"/><path d="M210 252.5 H221" stroke="#a0a0a0"/><path d="M212 257.5 H221" stroke="#a0a0a0"/><path d="M215 262.5 H221" stroke="#a0a0a0"/><path d="M212 267.5 H221" stroke="#a0a0a0"/><path d="M215 272.5 H221" stroke="#a0a0a0"/><path d="M205 277.5 H221" stroke="#a0a0a0"/><path d="M215 282.5 H221" stroke="#a0a0a0"/><path d="M212 287.5 H221" stroke="#a0a0a0"/><path d="M215 292.5 H221" stroke="#a0a0a0"/><path d="M212 297.5 H221" stroke="#a0a0a0"/><path d="M210 302.5 H221" stroke="#a0a0a0"/><path d="M212 307.5 H221" stroke="#a0a0a0"/><path d="M215 312.5 H221" stroke="#a0a0a0"/><path d="M212 317.5 H221" stroke="#a0a0a0"/><path d="M215 322.5 H221" stroke="#a0a0a0"/><path d="M205 327.5 H221" stroke="#a0a0a0"/><path d="M215 332.5 H221" stroke="#a0a0a0"/><path d="M212 337.5 H221" stroke="#a0a0a0"/><path d="M215 342.5 H221" stroke="#a0a0a0"/><path d="M212 347.5 H221" stroke="#a0a0a0"/><path d="M210 352.5 H221" stroke="#a0a0a0"/><path d="M212 357.5 H221" stroke="#a0a0a0"/><path d="M215 362.5 H221" stroke="#a0a0a0"/><path d="M212 367.5 H221" stroke="#a0a0a0"/><path d="M215 372.5 H221" stroke="#a0a0a0"/><path d="M205 377.5 H221" stroke="#a0a0a0"/><path d="M215 382.5 H221" stroke="#a0a0a0"/><path d="M212 387.5 H221" stroke="#a0a0a0"/><path d="M215 392.5 H221" stroke="#a0a0a0"/><path d="M212 397.5 H221" stroke="#a0a0a0"/><path d="M210 402.5 H221" stroke="#a0a0a0"/><path d="M212 407.5 H221" stroke="#a0a0a0"/><path d="M215 412.5 H221" stroke="#a0a0a0"/><path d="M212 417.5 H221" stroke="#a0a0a0"/><path d="M215 422.5 H221" stroke="#a0a0a0"/><path d="M205 427.5 H221" stroke="#a0a0a0"/><path d="M215 432.5 H221" stroke="#a0a0a0"/><path d="M212 437.5 H221" stroke="#a0a0a0"/><path d="M215 442.5 H221" stroke="#a0a0a0"/><path d="M212 447.5 H221" stroke="#a0a0a0"/><path d="M210 452.5 H221" stroke="#a0a0a0"/><path d="M212 457.5 H221" stroke="#a0a0a0"/><path d="M215 462.5 H221" stroke="#a0a0a0"/><path d="M212 467.5 H221" stroke="#a0a0a0"/><path d="M215 472.5 H221" stroke="#a0a0a0"/><path d="M205 477.5 H221" stroke="#a0a0a0"/><path d="M215 482.5 H221" stroke="#a0a0a0"/><path d="M212 487.5 H221" stroke="#a0a0a0"/><path d="M215 492.5 H221" stroke="#a0a0a0"/><path d="M212 497.5 H221" stroke="#a0a0a0"/><path d="M210 502.5 H221" stroke="#a0a0a0"/><path d="M212 507.5 H221" stroke="#a0a0a0"/><path d="M215 512.5 H221" stroke="#a0a0a0"/><path d="M212 517.5 H221" stroke="#a0a0a0"/><path d="M215 522.5 H221" stroke="#a0a0a0"/><path d="M205 527.5 H221" stroke="#a0a0a0"/><path d="M215 532.5 H221" stroke="#a0a0a0"/><path d="M212 537.5 H221" stroke="#a0a0a0"/><path d="M215 542.5 H221" stroke="#a0a0a0"/><path d="M212 547.5 H221" stroke="#a0a0a0"/><path d="M210 552.5 H221" stroke="#a0a0a0"/><path d="M212 557.5 H221" stroke="#a0a0a0"/><path d="M215 562.5 H221" stroke="#a0a0a0"/><path d="M212 567.5 H221" stroke="#a0a0a0"/><path d="M215 572.5 H221" stroke="#a0a0a0"/><path d="M205 577.5 H221" stroke="#a0a0a0"/><path d="M215 582.5 H221" stroke="#a0a0a0"/><path d="M212 587.5 H221" stroke="#a0a0a0"/><path d="M215 592.5 H221" stroke="#a0a0a0"/><path d="M212 597.5 H221" stroke="#a0a0a0"/><path d="M210 602.5 H221" stroke="#a0a0a0"/><path d="M212 607.5 H221" stroke="#a0a0a0"/><path d="M215 612.5 H221" stroke="#a0a0a0"/><path d="M212 617.5 H221" stroke="#a0a0a0"/><path d="M215 622.5 H221" stroke="#a0a0a0"/><path d="M205 627.5 H221" stroke="#a0a0a0"/><path d="M215 632.5 H221" stroke="#a0a0a0"/><path d="M212 637.5 H221" stroke="#a0a0a0"/><path d="M215 642.5 H221" stroke="#a0a0a0"/><path d="M212 647.5 H221" stroke="#a0a0a0"/><path d="M210 652.5 H221" stroke="#a0a0a0"/><path d="M212 657.5 H221" stroke="#a0a0a0"/><path d="M215 662.5 H221" stroke="#a0a0a0"/><path d="M212 667.5 H221" stroke="#a0a0a0"/><path d="M215 672.5 H221" stroke="#a0a0a0"/><path d="M205 677.5 H221" stroke="#a0a0a0"/><path d="M215 682.5 H221" stroke="#a0a0a0"/><path d="M212 687.5 H221" stroke="#a0a0a0"/><path d="M215 692.5 H221" stroke="#a0a0a0"/><path d="M212 697.5 H221" stroke="#a0a0a0"/><path d="M210 702.5 H221" stroke="#a0a0a0"/><path d="M212 707.5 H221" stroke="#a0a0a0"/><path d="M215 712.5 H221" stroke="#a0a0a0"/><path d="M212 717.5 H221" stroke="#a0a0a0"/><path d="M215 722.5 H221" stroke="#a0a0a0"/><path d="M205 727.5 H221" stroke="#a0a0a0"/><path d="M215 732.5 H221" stroke="#a0a0a0"/><path d="M212 737.5 H221" stroke="#a0a0a0"/><path d="M215 742.5 H221" stroke="#a0a0a0"/><path d="M212 747.5 H221" stroke="#a0a0a0"/><path d="M210 752.5 H221" stroke="#a0a0a0"/><path d="M212 757.5 H221" stroke="#a0a0a0"/></svg>
<div class="t" style="left:245px;top:182px;font-size:9px;color:#222;background:#e9e9e9;padding-right:1px">4</div>
<div class="t" style="left:295px;top:182px;font-size:9px;color:#222;background:#e9e9e9;padding-right:1px">5</div>
<div class="t" style="left:345px;top:182px;font-size:9px;color:#222;background:#e9e9e9;padding-right:1px">6</div>
<div class="t" style="left:395px;top:182px;font-size:9px;color:#222;background:#e9e9e9;padding-right:1px">7</div>
<div class="t" style="left:445px;top:182px;font-size:9px;color:#222;background:#e9e9e9;padding-right:1px">8</div>
<div class="t" style="left:495px;top:182px;font-size:9px;color:#222;background:#e9e9e9;padding-right:1px">9</div>
<div class="t" style="left:545px;top:182px;font-size:9px;color:#222;background:#e9e9e9;padding-right:1px">10</div>
<div class="t" style="left:595px;top:182px;font-size:9px;color:#222;background:#e9e9e9;padding-right:1px">11</div>
<div class="t" style="left:645px;top:182px;font-size:9px;color:#222;background:#e9e9e9;padding-right:1px">12</div>
<div class="t" style="left:695px;top:182px;font-size:9px;color:#222;background:#e9e9e9;padding-right:1px">13</div>
<div class="t" style="left:745px;top:182px;font-size:9px;color:#222;background:#e9e9e9;padding-right:1px">14</div>
<div class="t" style="left:795px;top:182px;font-size:9px;color:#222;background:#e9e9e9;padding-right:1px">15</div>
<div class="t" style="left:845px;top:182px;font-size:9px;color:#222;background:#e9e9e9;padding-right:1px">16</div>
<div class="t" style="left:895px;top:182px;font-size:9px;color:#222;background:#e9e9e9;padding-right:1px">17</div>
<div class="t" style="left:945px;top:182px;font-size:9px;color:#222;background:#e9e9e9;padding-right:1px">18</div>
<div class="t" style="left:995px;top:182px;font-size:9px;color:#222;background:#e9e9e9;padding-right:1px">19</div>
<div class="t" style="left:1045px;top:182px;font-size:9px;color:#222;background:#e9e9e9;padding-right:1px">20</div>
<div class="t" style="left:1095px;top:182px;font-size:9px;color:#222;background:#e9e9e9;padding-right:1px">21</div>
<div class="t" style="left:1145px;top:182px;font-size:9px;color:#222;background:#e9e9e9;padding-right:1px">22</div>
<div class="t" style="left:1195px;top:182px;font-size:9px;color:#222;background:#e9e9e9;padding-right:1px">23</div>
<div class="t" style="left:1245px;top:182px;font-size:9px;color:#222;background:#e9e9e9;padding-right:1px">24</div>
<div class="t" style="left:1295px;top:182px;font-size:9px;color:#222;background:#e9e9e9;padding-right:1px">25</div>
<div class="t" style="left:1345px;top:182px;font-size:9px;color:#222;background:#e9e9e9;padding-right:1px">26</div>
<div class="t" style="left:1395px;top:182px;font-size:9px;color:#222;background:#e9e9e9;padding-right:1px">27</div>
<div class="t" style="left:1445px;top:182px;font-size:9px;color:#222;background:#e9e9e9;padding-right:1px">28</div>
<div class="t" style="left:206px;top:227px;font-size:9px;color:#222;width:9px;height:14px"><span style="position:absolute;left:0;top:0;transform-origin:0 0;transform:translate(0px,12px) rotate(-90deg);background:#e9e9e9">21</span></div>
<div class="t" style="left:206px;top:277px;font-size:9px;color:#222;width:9px;height:14px"><span style="position:absolute;left:0;top:0;transform-origin:0 0;transform:translate(0px,12px) rotate(-90deg);background:#e9e9e9">20</span></div>
<div class="t" style="left:206px;top:327px;font-size:9px;color:#222;width:9px;height:14px"><span style="position:absolute;left:0;top:0;transform-origin:0 0;transform:translate(0px,12px) rotate(-90deg);background:#e9e9e9">19</span></div>
<div class="t" style="left:206px;top:377px;font-size:9px;color:#222;width:9px;height:14px"><span style="position:absolute;left:0;top:0;transform-origin:0 0;transform:translate(0px,12px) rotate(-90deg);background:#e9e9e9">18</span></div>
<div class="t" style="left:206px;top:427px;font-size:9px;color:#222;width:9px;height:14px"><span style="position:absolute;left:0;top:0;transform-origin:0 0;transform:translate(0px,12px) rotate(-90deg);background:#e9e9e9">17</span></div>
<div class="t" style="left:206px;top:477px;font-size:9px;color:#222;width:9px;height:14px"><span style="position:absolute;left:0;top:0;transform-origin:0 0;transform:translate(0px,12px) rotate(-90deg);background:#e9e9e9">16</span></div>
<div class="t" style="left:206px;top:527px;font-size:9px;color:#222;width:9px;height:14px"><span style="position:absolute;left:0;top:0;transform-origin:0 0;transform:translate(0px,12px) rotate(-90deg);background:#e9e9e9">15</span></div>
<div class="t" style="left:206px;top:577px;font-size:9px;color:#222;width:9px;height:14px"><span style="position:absolute;left:0;top:0;transform-origin:0 0;transform:translate(0px,12px) rotate(-90deg);background:#e9e9e9">14</span></div>
<div class="t" style="left:206px;top:627px;font-size:9px;color:#222;width:9px;height:14px"><span style="position:absolute;left:0;top:0;transform-origin:0 0;transform:translate(0px,12px) rotate(-90deg);background:#e9e9e9">13</span></div>
<div class="t" style="left:206px;top:677px;font-size:9px;color:#222;width:9px;height:14px"><span style="position:absolute;left:0;top:0;transform-origin:0 0;transform:translate(0px,12px) rotate(-90deg);background:#e9e9e9">12</span></div>
<div class="t" style="left:206px;top:727px;font-size:9px;color:#222;width:9px;height:14px"><span style="position:absolute;left:0;top:0;transform-origin:0 0;transform:translate(0px,12px) rotate(-90deg);background:#e9e9e9">11</span></div><svg style="left:0;top:0" width="1920" height="1034"><path d="M793 383.5 H1300.5 V486.5 H1256.5 V760 H1248.5 V477.5 H1292 V393 H793 Z" fill="#b9b9b9"/><path d="M793 383.5 H1300.5 V486.5 H1256.5 V760" fill="none" stroke="#111" stroke-width="1.2"/><path d="M793 391.5 H1293.5 V479 H1250 V760" fill="none" stroke="#000" stroke-width="3"/><path d="M795 387.5 H1296.5 V482.5 H1253 V760" fill="none" stroke="#e8a080" stroke-width="1" stroke-dasharray="1 4" opacity="0.7"/><path d="M797.0 335 L806.3 319.5 V329.5 H902.4 V319.5 L911.7 335 L902.4 350.5 V341.5 H806.3 V350.5 Z" fill="#fff" stroke="#000" stroke-width="1"/><path d="M919.0 335 L928.3 319.5 V329.5 H1024.4 V319.5 L1033.7 335 L1024.4 350.5 V341.5 H928.3 V350.5 Z" fill="#fff" stroke="#000" stroke-width="1"/><path d="M1041.0 335 L1050.3 319.5 V329.5 H1146.4 V319.5 L1155.7 335 L1146.4 350.5 V341.5 H1050.3 V350.5 Z" fill="#fff" stroke="#000" stroke-width="1"/><path d="M1163.0 335 L1172.3 319.5 V329.5 H1268.4 V319.5 L1277.7 335 L1268.4 350.5 V341.5 H1172.3 V350.5 Z" fill="#fff" stroke="#000" stroke-width="1"/><rect x="793.5" y="302.8" width="488.0" height="3.4" fill="#151515"/><rect x="793.5" y="303.5" width="488.0" height="2" fill="#809c30"/><rect x="793.5" y="363.8" width="488.0" height="3.4" fill="#151515"/><rect x="793.5" y="364.5" width="488.0" height="2" fill="#d8ddb0"/><rect x="791.9" y="304.5" width="3.2" height="61.0" fill="#151515"/><rect x="792.6" y="304.5" width="1.8" height="61.0" fill="#809c30"/><rect x="913.9" y="304.5" width="3.2" height="61.0" fill="#151515"/><rect x="914.6" y="304.5" width="1.8" height="61.0" fill="#d8ddb0"/><rect x="1035.9" y="304.5" width="3.2" height="61.0" fill="#151515"/><rect x="1036.6" y="304.5" width="1.8" height="61.0" fill="#d8ddb0"/><rect x="1157.9" y="304.5" width="3.2" height="61.0" fill="#151515"/><rect x="1158.6" y="304.5" width="1.8" height="61.0" fill="#d8ddb0"/><rect x="1279.9" y="304.5" width="3.2" height="61.0" fill="#151515"/><rect x="1280.6" y="304.5" width="1.8" height="61.0" fill="#809c30"/><rect x="796" y="306" width="483" height="1" fill="#8aa0d8" opacity="0.5"/><circle cx="793.5" cy="304.5" r="2.8" fill="#c8c8c8" stroke="#2a2a2a" stroke-width="1.4"/><circle cx="793.5" cy="304.5" r="1" fill="#555"/><circle cx="793.5" cy="365.5" r="2.8" fill="#c8c8c8" stroke="#2a2a2a" stroke-width="1.4"/><circle cx="793.5" cy="365.5" r="1" fill="#555"/><circle cx="915.5" cy="304.5" r="2.8" fill="#c8c8c8" stroke="#2a2a2a" stroke-width="1.4"/><circle cx="915.5" cy="304.5" r="1" fill="#555"/><circle cx="915.5" cy="365.5" r="2.8" fill="#c8c8c8" stroke="#2a2a2a" stroke-width="1.4"/><circle cx="915.5" cy="365.5" r="1" fill="#555"/><circle cx="1037.5" cy="304.5" r="2.8" fill="#c8c8c8" stroke="#2a2a2a" stroke-width="1.4"/><circle cx="1037.5" cy="304.5" r="1" fill="#555"/><circle cx="1037.5" cy="365.5" r="2.8" fill="#c8c8c8" stroke="#2a2a2a" stroke-width="1.4"/><circle cx="1037.5" cy="365.5" r="1" fill="#555"/><circle cx="1159.5" cy="304.5" r="2.8" fill="#c8c8c8" stroke="#2a2a2a" stroke-width="1.4"/><circle cx="1159.5" cy="304.5" r="1" fill="#555"/><circle cx="1159.5" cy="365.5" r="2.8" fill="#c8c8c8" stroke="#2a2a2a" stroke-width="1.4"/><circle cx="1159.5" cy="365.5" r="1" fill="#555"/><circle cx="1281.5" cy="304.5" r="2.8" fill="#c8c8c8" stroke="#2a2a2a" stroke-width="1.4"/><circle cx="1281.5" cy="304.5" r="1" fill="#555"/><circle cx="1281.5" cy="365.5" r="2.8" fill="#c8c8c8" stroke="#2a2a2a" stroke-width="1.4"/><circle cx="1281.5" cy="365.5" r="1" fill="#555"/><path d="M754.5 508 L777 529.8 L767.5 530.8 L772.6 541.5 Q773.5 544.5 770 545.2 Q768 545.5 767.3 543.2 L762.3 533.3 L754.3 538.5 Z" fill="#f4f4f4" stroke="#000" stroke-width="2" stroke-linejoin="round"/></svg>
<div class="t" style="left:838.5px;top:292px;width:32px;text-align:center;font-size:10.5px;color:#111">2.44 m</div>
<div class="t" style="left:846.5px;top:329px;width:16px;text-align:center;font-size:11.5px;color:#111">4P</div>
<div class="t" style="left:960.5px;top:292px;width:32px;text-align:center;font-size:10.5px;color:#111">2.44 m</div>
<div class="t" style="left:968.5px;top:329px;width:16px;text-align:center;font-size:11.5px;color:#111">4P</div>
<div class="t" style="left:1082.5px;top:292px;width:32px;text-align:center;font-size:10.5px;color:#111">2.44 m</div>
<div class="t" style="left:1090.5px;top:329px;width:16px;text-align:center;font-size:11.5px;color:#111">4P</div>
<div class="t" style="left:1204.5px;top:292px;width:32px;text-align:center;font-size:10.5px;color:#111">2.44 m</div>
<div class="t" style="left:1212.5px;top:329px;width:16px;text-align:center;font-size:11.5px;color:#111">4P</div>
<div class="t" style="left:800.0px;top:354px;font-size:10px;color:#1c3a9e">4</div>
<div class="t" style="left:922.0px;top:354px;font-size:10px;color:#1c3a9e">7</div>
<div class="t" style="left:1044.0px;top:354px;font-size:10px;color:#1c3a9e">8</div>
<div class="t" style="left:1166.0px;top:354px;font-size:10px;color:#1c3a9e">9</div>
<div class="t" style="left:770px;top:328px;width:32px;text-align:center;font-size:10.5px;color:#111;transform:rotate(-90deg)">1.22 m</div>
<div class="t" style="left:891.5px;top:328px;width:32px;text-align:center;font-size:10.5px;color:#111;transform:rotate(-90deg)">1.22 m</div>
<div class="t" style="left:1013.5px;top:328px;width:32px;text-align:center;font-size:10.5px;color:#111;transform:rotate(-90deg)">1.22 m</div>
<div class="t" style="left:1135.5px;top:328px;width:32px;text-align:center;font-size:10.5px;color:#111;transform:rotate(-90deg)">1.22 m</div>
<div class="a" style="left:1468px;top:197px;width:17px;height:560px;background:#f3f3f3"></div>
<div class="a" style="left:1485px;top:180px;width:5px;height:596px;background:#fafafa"></div>
<div class="a" style="left:1469px;top:182px;width:15px;height:15px;background:#fff;border:1px solid #8a8a8a"></div>
<svg style="left:1472px;top:186px" width="9" height="6"><path d="M0 5 H9 L4.5 0 Z" fill="#222"/></svg>
<div class="a" style="left:1469px;top:743px;width:15px;height:15px;background:#fff;border:1px solid #8a8a8a"></div>
<svg style="left:1472px;top:748px" width="9" height="6"><path d="M0 0 H9 L4.5 5 Z" fill="#222"/></svg>
<div class="a" style="left:1470px;top:417px;width:13px;height:93px;background:#fff;border:1px solid #9a9a9a"></div>
<div class="a" style="left:222px;top:761px;width:1229px;height:15px;background:#f3f3f3"></div>
<div class="a" style="left:207px;top:761px;width:15px;height:15px;background:#fff;border:1px solid #8a8a8a"></div>
<svg style="left:211px;top:764px" width="6" height="9"><path d="M5 0 V9 L0 4.5 Z" fill="#222"/></svg>
<div class="a" style="left:1451px;top:761px;width:15px;height:15px;background:#fff;border:1px solid #8a8a8a"></div>
<svg style="left:1456px;top:764px" width="6" height="9"><path d="M0 0 V9 L5 4.5 Z" fill="#222"/></svg>
<div class="a" style="left:657px;top:761px;width:257px;height:15px;background:#fff;border:1px solid #8a8a8a"></div>
<div class="t" style="left:226px;top:790px;font-size:10.5px;font-weight:bold;color:#2b5fb0">Plan</div>
<div class="a" style="left:270px;top:788px;width:1px;height:16px;background:#d4d4d4"></div>
<div class="t" style="left:285px;top:790px;font-size:11px;color:#3a4060">All</div>
<svg style="left:302px;top:793px" width="9" height="5"><path d="M0 5 H9 L4.5 0 Z" fill="#2b5fb0"/></svg>
<div class="a" style="left:327px;top:788px;width:1px;height:16px;background:#d4d4d4"></div>
<svg style="left:338px;top:788px" width="16" height="16"><circle cx="8" cy="8" r="7" fill="none" stroke="#3b62b0" stroke-width="1.1"/><path d="M8 3.5 V12.5 M3.5 8 H12.5" stroke="#3b62b0" stroke-width="1.1"/></svg><div class="a" style="left:1493px;top:163px;width:422px;height:650px;background:#ececec;border:1px solid #b4b4b4"></div>
<div class="a" style="left:1494px;top:164px;width:420px;height:24px;background:#dcdcdc"></div>
<div class="t" style="left:1500px;top:171px;font-size:10.8px;font-weight:bold;color:#1a1a1a">3D View</div>
<svg style="left:1878px;top:170px" width="10" height="11"><path d="M2.5 1 H7.5 M3.5 1 V6 M6.5 1 V6 M1.5 6 H8.5 M5 6 V10.5" stroke="#555" stroke-width="1" fill="none"/></svg>
<svg style="left:1899px;top:171px" width="10" height="10"><path d="M0.5 0.5 L9 9 M9 0.5 L0.5 9" stroke="#444" stroke-width="1.2"/></svg>
<div class="a" style="left:1494px;top:188px;width:420px;height:1px;background:#c4c4c4"></div>
<div class="a" style="left:1494px;top:189px;width:420px;height:25px;background:#f0f0f0"></div>
<div class="a" style="left:1495px;top:189px;width:93px;height:26px;background:#f4f4f4;border:1px solid #c8c8c8;border-bottom:none"></div>
<div class="a" style="left:1587px;top:190px;width:63px;height:24px;background:#dedede;border:1px solid #c4c4c4"></div>
<div class="a" style="left:1650px;top:213px;width:264px;height:1px;background:#c4c4c4"></div>
<svg style="left:1502px;top:193px" width="17" height="17"><path d="M2 4 L9 1 L15 4 V12 L8 15 L2 12 Z" fill="none" stroke="#3a8ad8" stroke-width="1.2"/><path d="M2 4 L8 7 L15 4 M8 7 V15" fill="none" stroke="#3a8ad8" stroke-width="1"/><path d="M2 12 L9 9 L15 12 M9 1 V9" fill="none" stroke="#8cc0ee" stroke-width="0.7"/></svg>
<div class="t" style="left:1521px;top:196px;font-size:11.5px;color:#1a1a1a">Conceptual</div>
<svg style="left:1592px;top:194px" width="17" height="17"><path d="M2 4 L9 1 L15 4 V12 L8 15 L2 12 Z" fill="#7ab8ea" stroke="#3a8ad8" stroke-width="1.2"/><path d="M2 4 L8 7 L15 4 M8 7 V15" fill="none" stroke="#3a8ad8" stroke-width="1"/></svg>
<div class="t" style="left:1611px;top:196px;font-size:11.5px;color:#1a1a1a">Model</div>
<div class="a" style="left:1494px;top:214px;width:420px;height:26px;background:#f0f0f0"></div>
<svg style="left:0;top:0" width="1" height="1"><path d="M1505 220 V233 L1508 230 L1511 236 L1513 235 L1510 229 L1514 229 Z" fill="#111"/><circle cx="1533" cy="226" r="5" fill="none" stroke="#111" stroke-width="1.5"/><path d="M1536.5 229.5 L1541 234" stroke="#111" stroke-width="2"/><path d="M1555 222 L1559 226 M1566 222 L1562 226 M1555 234 L1559 230 M1566 234 L1562 230" stroke="#111" stroke-width="1.4"/><path d="M1554 221 H1558.5 L1554 225.5 Z M1567 221 H1562.5 L1567 225.5 Z M1554 235 H1558.5 L1554 230.5 Z M1567 235 H1562.5 L1567 230.5 Z" fill="#111"/><circle cx="1584" cy="225" r="5.5" fill="#5aa8e8" stroke="#111" stroke-width="1.4"/><path d="M1588 229 L1593 234" stroke="#111" stroke-width="1.6"/><rect x="1605.5" y="219.5" width="13" height="13" fill="none" stroke="#3a7ad0" stroke-width="1" stroke-dasharray="2 1.5"/><circle cx="1611" cy="225.5" r="4" fill="none" stroke="#111" stroke-width="1.4"/><path d="M1614 228.5 L1618 233" stroke="#111" stroke-width="1.6"/><path d="M1631 225 Q1639 217 1646 225 Q1639 232 1631 225 Z" fill="none" stroke="#111" stroke-width="1.3"/><circle cx="1639" cy="224" r="2.2" fill="none" stroke="#111" stroke-width="1.2"/><circle cx="1633" cy="230" r="2.5" fill="#f0f0f0" stroke="#111" stroke-width="1.2"/><path d="M1635 232 L1637 234" stroke="#111" stroke-width="1.2"/><path d="M1658 222 A8 8 0 0 1 1672 224 M1670 231 A8 8 0 0 1 1657 231" fill="none" stroke="#111" stroke-width="1.2"/><text x="1659" y="230" font-size="7.5" font-family="Liberation Sans" fill="#111">3D</text><path d="M1690 219 V235 M1682 227 H1698" stroke="#111" stroke-width="1.5"/><path d="M1690 218 L1687.5 221 H1692.5 Z M1690 236 L1687.5 233 H1692.5 Z M1681 227 L1684 224.5 V229.5 Z M1699 227 L1696 224.5 V229.5 Z" fill="#111"/><rect x="1709.5" y="224.5" width="8" height="9" fill="#f0f0f0" stroke="#111" stroke-width="1.2"/><path d="M1712.5 224.5 V220.5 H1720.5 V229.5 H1717.5" fill="none" stroke="#111" stroke-width="1.2"/><path d="M1725 226 H1730 L1727.5 229 Z" fill="#333"/><path d="M1743 222 L1751 219 L1758 222 V231 L1750 234 L1743 231 Z" fill="none" stroke="#3a8ad8" stroke-width="1.3"/><path d="M1745 232 L1754 223" stroke="#444" stroke-width="1.5"/><path d="M1761 226 H1766 L1763.5 229 Z" fill="#333"/><path d="M1779 222 L1786 219 L1793 222 V230 L1786 233 L1779 230 Z" fill="none" stroke="#3a8ad8" stroke-width="1.2"/><circle cx="1782" cy="230" r="3" fill="#f0f0f0" stroke="#555" stroke-width="1.3"/><path d="M1806 225 A6 6 0 0 1 1817 223 M1817 230 A6 6 0 0 1 1806 232" fill="none" stroke="#22a040" stroke-width="2"/><path d="M1818 219 V225 H1813 Z M1805 236 V230 H1810 Z" fill="#22a040"/></svg>
<div class="a" style="left:1496px;top:240px;width:417px;height:549px;background:#010104"></div>
<div class="a" style="left:1494px;top:789px;width:420px;height:23px;background:#efefef"></div>
<div class="a" style="left:1516px;top:792px;width:1px;height:17px;background:#c8c8c8"></div>
<svg style="left:0;top:0" width="1" height="1"><path d="M1667.4 361.2 L1913.0 536.7 M1661.3 365.6 L1906.9 541.4 M1655.2 370.0 L1900.7 546.1 M1649.1 374.4 L1894.6 550.7 M1643.0 378.7 L1888.4 555.4 M1636.9 383.1 L1882.3 560.1 M1630.8 387.5 L1876.1 564.8 M1624.7 391.9 L1870.0 569.4 M1618.6 396.3 L1863.9 574.1 M1612.5 400.7 L1857.7 578.8 M1606.4 405.1 L1851.6 583.5 M1600.3 409.4 L1845.4 588.1 M1594.2 413.8 L1839.3 592.8 M1588.1 418.2 L1833.1 597.5 M1582.0 422.6 L1827.0 602.2 M1575.9 427.0 L1820.9 606.8 M1569.8 431.4 L1814.7 611.5 M1563.7 435.8 L1808.6 616.2 M1557.6 440.1 L1802.4 620.9 M1551.5 444.5 L1796.3 625.5 M1545.4 448.9 L1790.1 630.2 M1539.3 453.3 L1784.0 634.9 M1533.2 457.7 L1777.9 639.6 M1527.1 462.1 L1771.7 644.2 M1521.0 466.5 L1765.6 648.9 M1514.9 470.8 L1759.4 653.6 M1508.8 475.2 L1753.3 658.2 M1502.7 479.6 L1747.1 662.9 M1496.6 484.0 L1741.0 667.6 M1667.4 361.2 L1496.6 484.0 M1673.5 365.6 L1502.7 488.6 M1679.7 370.0 L1508.8 493.2 M1685.8 374.4 L1514.9 497.8 M1692.0 378.8 L1521.0 502.4 M1698.1 383.1 L1527.1 506.9 M1704.2 387.5 L1533.3 511.5 M1710.4 391.9 L1539.4 516.1 M1716.5 396.3 L1545.5 520.7 M1722.7 400.7 L1551.6 525.3 M1728.8 405.1 L1557.7 529.9 M1734.9 409.5 L1563.8 534.5 M1741.1 413.9 L1569.9 539.1 M1747.2 418.2 L1576.0 543.7 M1753.4 422.6 L1582.1 548.3 M1759.5 427.0 L1588.2 552.9 M1765.6 431.4 L1594.4 557.4 M1771.8 435.8 L1600.5 562.0 M1777.9 440.2 L1606.6 566.6 M1784.1 444.6 L1612.7 571.2 M1790.2 449.0 L1618.8 575.8 M1796.3 453.3 L1624.9 580.4 M1802.5 457.7 L1631.0 585.0 M1808.6 462.1 L1637.1 589.6 M1814.8 466.5 L1643.2 594.2 M1820.9 470.9 L1649.3 598.8 M1827.0 475.3 L1655.5 603.3 M1833.2 479.7 L1661.6 607.9 M1839.3 484.1 L1667.7 612.5 M1845.5 488.4 L1673.8 617.1 M1851.6 492.8 L1679.9 621.7 M1857.7 497.2 L1686.0 626.3 M1863.9 501.6 L1692.1 630.9 M1870.0 506.0 L1698.2 635.5 M1876.2 510.4 L1704.3 640.1 M1882.3 514.8 L1710.5 644.6 M1888.4 519.1 L1716.6 649.2 M1894.6 523.5 L1722.7 653.8 M1900.7 527.9 L1728.8 658.4 M1906.9 532.3 L1734.9 663.0 M1913.0 536.7 L1741.0 667.6" stroke="#3a3a42" stroke-width="0.9" fill="none"/><path d="M1667.4 371.7 L1511.3 484.2 L1741.0 656.5 L1898.3 537.0 Z" stroke="#c8c8c8" stroke-width="1" fill="none"/><path d="M1683 616 L1706 601 L1763 640" stroke="#b0b0b0" stroke-width="0.9" fill="none"/><path d="M1690 428.3 L1754 470.7 M1690 436.3 L1754 478.7 M1690 444.3 L1754 486.7 M1690 452.3 L1754 494.7 M1690 460.3 L1754 502.7 M1690 468.3 L1754 510.7 M1690 476.3 L1754 518.7 M1692 431.0 L1755 473.0 M1692 439.0 L1755 481.0 M1692 447.0 L1755 489.0 M1692 455.0 L1755 497.0 M1692 463.0 L1755 505.0" stroke="#20b030" stroke-width="0.9" fill="none"/><path d="M1690 424.0 V476.0 M1700 430.7 V482.7 M1710 437.3 V489.3 M1720 444.0 V496.0 M1730 450.7 V502.7 M1740 457.4 V509.4 M1750 464.0 V516.0" stroke="#e0e0e0" stroke-width="0.9" stroke-dasharray="2 1.5" fill="none"/><path d="M1697 433 L1750 469 M1697 449 L1750 485 M1697 465 L1750 501" stroke="#b06030" stroke-width="1" stroke-dasharray="2 3" fill="none"/><path d="M1686 425 V475 L1747 517 V468 Z" fill="none" stroke="#c4c4c4" stroke-width="2.6"/><path d="M1731 471 V526 M1736 468 V522 M1731 471 L1697 495 V550 L1726 527 M1736 522 L1747 516" fill="none" stroke="#c4c4c4" stroke-width="2.6"/><ellipse cx="1853.7" cy="318" rx="35.5" ry="25.5" fill="none" stroke="#2a2a2a" stroke-width="9"/><path d="M1853.7 269 L1881.7 284.5 L1854.2 305.3 L1826.1 284.5 Z" fill="#8c8c8c" stroke="#222" stroke-width="0.8"/><path d="M1826.1 284.5 L1854.2 305.3 L1854.2 330.4 L1830 314 Z" fill="#858585" stroke="#222" stroke-width="0.8"/><path d="M1881.7 284.5 L1854.2 305.3 L1854.2 330.4 L1878.8 313 Z" fill="#838383" stroke="#222" stroke-width="0.8"/><text x="1846" y="288" font-size="7" font-family="Liberation Sans" font-weight="bold" fill="#111" stroke="#111" stroke-width="0.3" transform="rotate(30 1852 285)">TOP</text><text x="1831" y="306" font-size="5.5" font-family="Liberation Sans" font-weight="bold" fill="#111" stroke="#111" stroke-width="0.3" transform="rotate(35 1840 305)">FRONT</text><text x="1857" y="318" font-size="5.5" font-family="Liberation Sans" font-weight="bold" fill="#111" stroke="#111" stroke-width="0.3" transform="rotate(-35 1866 312)">RIGHT</text><text x="1815" y="344" font-size="18" font-family="Liberation Sans" font-weight="bold" fill="#8a8a8a" stroke="#8a8a8a" stroke-width="1.2" transform="rotate(-30 1821 337)">S</text><text x="1876" y="343" font-size="18" font-family="Liberation Sans" font-weight="bold" fill="#8a8a8a" stroke="#8a8a8a" stroke-width="1.2" transform="rotate(30 1885 335)">E</text><path d="M1542 743 V729 M1542 743 L1560 731 M1542 743 L1556 753" stroke="#fff" stroke-width="2"/><path d="M1542 716.5 L1538 727 Q1537 731 1542 731 Q1547 731 1546 727 Z M1569 723.6 L1556 728.5 L1560 734.5 Z M1569 761.7 L1561 751 Q1557 749 1555.5 752.5 Q1555 756 1558 757.5 Z" fill="#fff"/><path d="M1538 741 H1546 V747 H1538 Z" fill="#fff"/><path d="M1545 705.5 H1552 L1545 713.5 H1552 M1571 713 L1574.5 717.5 L1578 713 M1574.5 717.5 V722 M1571 750 L1578 759 M1578 750 L1571 759" stroke="#fff" stroke-width="0.9" fill="none"/></svg><div class="a" style="left:1px;top:816px;width:1919px;height:218px;background:#fff"></div>
<div class="a" style="left:4px;top:818px;width:1911px;height:183px;background:#ededed;border:1px solid #b8b8b8"></div>
<div class="a" style="left:5px;top:819px;width:1909px;height:22px;background:#dcdcdc"></div>
<div class="a" style="left:5px;top:841px;width:1909px;height:1px;background:#c8c8c8"></div>
<div class="t" style="left:11px;top:825px;font-size:10.5px;font-weight:bold;color:#1a1a1a">Bay Level Editor (Select a Bay)</div>
<svg style="left:1878px;top:824px" width="10" height="11"><path d="M2.5 1 H7.5 M3.5 1 V6 M6.5 1 V6 M1.5 6 H8.5 M5 6 V10.5" stroke="#555" stroke-width="1" fill="none"/></svg>
<svg style="left:1899px;top:825px" width="10" height="10"><path d="M0.5 0.5 L9 9 M9 0.5 L0.5 9" stroke="#444" stroke-width="1.2"/></svg>
<div class="a" style="left:5px;top:842px;width:1909px;height:30px;background:#dedede"></div>
<div class="a" style="left:5px;top:872px;width:1909px;height:5px;background:#f0f0f0"></div>
<div class="t" style="left:34px;top:851px;font-size:11px;line-height:12px;height:12px;color:#8a8a8a">Add Level</div>
<div class="t" style="left:112px;top:851px;font-size:11px;line-height:12px;height:12px;color:#8a8a8a">Remove Top Level</div>
<div class="t" style="left:240px;top:851px;font-size:11px;line-height:12px;height:12px;color:#8a8a8a">Remove Selected</div>
<div class="t" style="left:355px;top:851px;font-size:11.5px;line-height:12px;height:12px;color:#8a8a8a">Plank all</div>
<div class="t" style="left:427px;top:851px;font-size:11.3px;line-height:12px;height:12px;color:#8a8a8a">Plank every other</div>
<div class="t" style="left:544px;top:851px;font-size:11.6px;line-height:12px;height:12px;color:#8a8a8a">Invert planked</div>
<div class="t" style="left:656px;top:851px;font-size:11px;line-height:12px;height:12px;color:#8a8a8a">Reset overrides</div>
<svg style="left:0;top:0" width="1" height="1"><path d="M14 852 H19 M16.5 849.5 V854.5" stroke="#c0c0c0" stroke-width="1"/><rect x="18.5" y="855.5" width="9" height="4" fill="none" stroke="#c0c0c0"/><rect x="18.5" y="860.5" width="9" height="4" fill="none" stroke="#c0c0c0"/><path d="M93 850 L97 854 M97 850 L93 854" stroke="#c0c0c0" stroke-width="1"/><rect x="96.5" y="855.5" width="9" height="4" fill="none" stroke="#c0c0c0"/><rect x="96.5" y="860.5" width="9" height="4" fill="none" stroke="#c0c0c0"/><path d="M98 855 H104" stroke="#c0c0c0"/><path d="M221 850 L225 854 M225 850 L221 854" stroke="#c0c0c0" stroke-width="1"/><rect x="224.5" y="855.5" width="9" height="4" fill="none" stroke="#c0c0c0"/><rect x="224.5" y="860.5" width="9" height="4" fill="none" stroke="#c0c0c0"/><path d="M226 855 H232" stroke="#c0c0c0"/><path d="M334 851.5 H343 M334 854.5 H343 M334 857.5 H343 M334 860.5 H343 M334 863.5 H343 M345 852 V854 M345 857 V859 M345 862 V864" fill="none" stroke="#c0c0c0" stroke-width="1.1"/><path d="M406 851.5 H415 M406 854.5 H415 M406 857.5 H415 M406 860.5 H415 M406 863.5 H415 M417 852 V854 M417 857 V859 M417 862 V864" fill="none" stroke="#c0c0c0" stroke-width="1.1"/><path d="M523 851.5 H532 M523 854.5 H532 M523 857.5 H532 M523 860.5 H532 M523 863.5 H532 M534 852 V854 M534 857 V859 M534 862 V864" fill="none" stroke="#c0c0c0" stroke-width="1.1"/><rect x="642.5" y="850.5" width="8" height="14" fill="none" stroke="#c0c0c0"/><path d="M644 854.5 H649 M644 857.5 H649 M644 860.5 H649 M636 853 A3 3 0 1 1 640 856" fill="none" stroke="#c0c0c0"/></svg>
<div class="a" style="left:211px;top:846px;width:1px;height:22px;background:#c8c8c8"></div>
<div class="a" style="left:626px;top:846px;width:1px;height:22px;background:#c8c8c8"></div>
<div class="a" style="left:742px;top:844px;width:1px;height:26px;background:#cacaca"></div>
<div class="a" style="left:9px;top:877px;width:1903px;height:119px;background:#fdfdfb;border:1px solid #a0a0a0"></div>
<div class="a" style="left:10px;top:878px;width:1901px;height:22px;background:#f0f0f0;border-bottom:1px solid #a8a8a8"></div>
<div class="a" style="left:61px;top:878px;width:1px;height:22px;background:#b0b0b0"></div>
<div class="a" style="left:117px;top:878px;width:1px;height:22px;background:#b0b0b0"></div>
<div class="a" style="left:172px;top:878px;width:1px;height:22px;background:#b0b0b0"></div>
<div class="a" style="left:253px;top:878px;width:1px;height:22px;background:#b0b0b0"></div>
<div class="a" style="left:321px;top:878px;width:1px;height:22px;background:#b0b0b0"></div>
<div class="a" style="left:391px;top:878px;width:1px;height:22px;background:#b0b0b0"></div>
<div class="a" style="left:467px;top:878px;width:1px;height:22px;background:#b0b0b0"></div>
<div class="a" style="left:535px;top:878px;width:1px;height:22px;background:#b0b0b0"></div>
<div class="a" style="left:600px;top:878px;width:1px;height:22px;background:#b0b0b0"></div>
<div class="a" style="left:663px;top:878px;width:1px;height:22px;background:#b0b0b0"></div>
<div class="a" style="left:763px;top:878px;width:1px;height:22px;background:#b0b0b0"></div>
<div class="a" style="left:823px;top:878px;width:1px;height:22px;background:#b0b0b0"></div>
<div class="a" style="left:857px;top:878px;width:1px;height:22px;background:#b0b0b0"></div>
<div class="a" style="left:905px;top:878px;width:1px;height:22px;background:#b0b0b0"></div>
<div class="a" style="left:173px;top:878px;width:1px;height:22px;background:#d0d0d0"></div>
<div class="t" style="left:14px;top:884px;font-size:11px;color:#555">Level</div>
<div class="t" style="left:66px;top:884px;font-size:11px;color:#555">Elevation</div>
<div class="t" style="left:122px;top:884px;font-size:11px;color:#555">Planked</div>
<div class="t" style="left:178px;top:884px;font-size:11px;color:#555">Nodes in lift</div>
<div class="t" style="left:258px;top:884px;font-size:11px;color:#555">Guardrails</div>
<div class="t" style="left:326px;top:884px;font-size:11px;color:#555">Toeboards</div>
<div class="t" style="left:396px;top:884px;font-size:11px;color:#555">Vert. Braces</div>
<div class="t" style="left:472px;top:884px;font-size:11px;color:#555">Plan Brace</div>
<div class="t" style="left:540px;top:884px;font-size:11px;color:#555">Ties</div>
<div class="t" style="left:605px;top:884px;font-size:11px;color:#555">Ledgers</div>
<div class="t" style="left:668px;top:884px;font-size:11px;color:#555">Cantilever/Brack...</div>
<div class="t" style="left:768px;top:884px;font-size:11px;color:#555">Netting</div>
<div class="t" style="left:828px;top:884px;font-size:11px;color:#555">Skip</div>
<div class="t" style="left:862px;top:884px;font-size:11px;color:#555">More</div>
<svg style="left:44px;top:886px" width="11" height="6"><path d="M0 0 H11 L5.5 6 Z" fill="#555"/></svg>
<div class="a" style="left:0;top:1003px;width:1920px;height:28px;background:#dadada"></div>
<div class="a" style="left:0;top:1031px;width:1920px;height:3px;background:#f4f8fc"></div>
<div class="a" style="left:0;top:816px;width:1px;height:215px;background:#7a7a7a"></div>
<div class="t" style="left:7px;top:1012px;font-size:10.5px;color:#111">RING</div>
<div class="t" style="left:1399px;top:1012px;font-size:11px;color:#111">Bays:</div>
<div class="t" style="left:1448px;top:1012px;font-size:11px;color:#111">Levels:</div>
<div class="t" style="left:1504px;top:1012px;font-size:11px;color:#111">Max elev:</div>
<div class="t" style="left:1574px;top:1012px;font-size:11px;color:#111">Min elev:</div>
<div class="t" style="left:1643px;top:1012px;font-size:11px;color:#111">Leg length:</div>
<div class="t" style="left:1724px;top:1012px;font-size:11px;color:#111">Volume:</div>
<div class="a" style="left:1441px;top:1007px;width:1px;height:20px;background:#c0c0c0"></div>
<div class="a" style="left:1497px;top:1007px;width:1px;height:20px;background:#c0c0c0"></div>
<div class="a" style="left:1567px;top:1007px;width:1px;height:20px;background:#c0c0c0"></div>
<div class="a" style="left:1636px;top:1007px;width:1px;height:20px;background:#c0c0c0"></div>
<div class="a" style="left:1717px;top:1007px;width:1px;height:20px;background:#c0c0c0"></div>
<div class="a" style="left:1775px;top:1007px;width:1px;height:20px;background:#c0c0c0"></div>
<div class="a" style="left:1780px;top:1005px;width:24px;height:24px;background:#f5a020"></div>
<svg style="left:1780px;top:1005px" width="24" height="24"><path d="M6.5 11 A5.5 5.5 0 0 1 16.5 9 M17.5 13 A5.5 5.5 0 0 1 7.5 15" fill="none" stroke="#1a60c0" stroke-width="1.8"/><path d="M18 6 V11 H13 Z M6 18 V13 H11 Z" fill="#1a60c0"/></svg>
<svg style="left:0;top:0" width="1" height="1"><rect x="1813.5" y="1010.5" width="14" height="14" fill="none" stroke="#222" stroke-width="1.2"/><path d="M1816 1016 V1013 H1819 M1825 1016 V1013 H1822 M1816 1019 V1022 H1819 M1825 1019 V1022 H1822" fill="none" stroke="#222" stroke-width="1.2"/><circle cx="1843.5" cy="1015" r="5" fill="none" stroke="#222" stroke-width="1.3"/><path d="M1841 1015 H1846 M1847 1018.5 L1852 1024" stroke="#222" stroke-width="1.4"/><circle cx="1901.5" cy="1015" r="5" fill="none" stroke="#222" stroke-width="1.3"/><path d="M1899 1015 H1904 M1901.5 1012.5 V1017.5 M1905 1018.5 L1910 1024" stroke="#222" stroke-width="1.4"/></svg>
<div class="t" style="left:1862px;top:1012px;font-size:10.5px;color:#111">133%</div><div class="a" style="left:2px;top:162px;width:1px;height:654px;border-left:1px dotted #111"></div>
<div class="a" style="left:2px;top:162px;width:1489px;height:1px;border-top:1px dotted #111"></div>
<div class="a" style="left:2px;top:815px;width:1489px;height:1px;border-top:1px dotted #111"></div>
<div class="a" style="left:1490px;top:162px;width:1px;height:654px;border-left:1px dotted #111"></div>
</body></html>
